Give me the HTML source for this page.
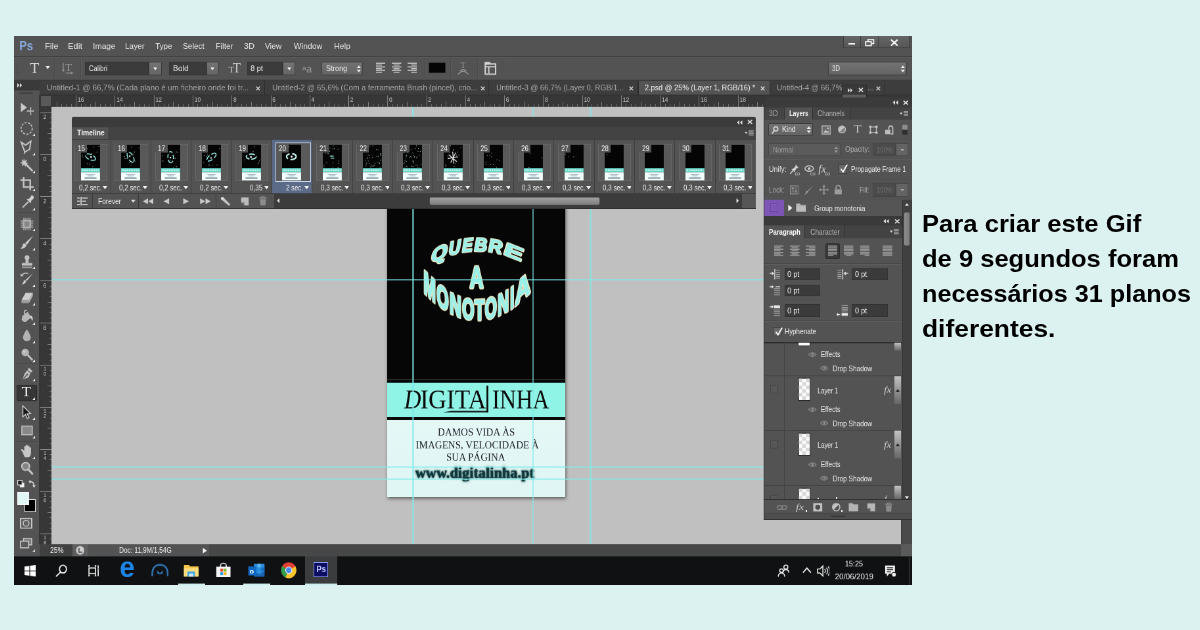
<!DOCTYPE html>
<html><head><meta charset="utf-8"><title>Photoshop timeline</title>
<style>
html,body{margin:0;padding:0;}
body{width:1200px;height:630px;overflow:hidden;background:#dcf2f0;position:relative;font-family:"Liberation Sans",sans-serif;}
#ps{position:absolute;left:14px;top:36px;width:1366px;height:768px;transform-origin:0 0;transform:scale(0.65703,0.71484);overflow:hidden;background:#535353;will-change:transform;}
#ps div,#ps svg{position:absolute;box-sizing:border-box;}
#ps .t{white-space:nowrap;}
#cap{position:absolute;left:921.6px;top:206px;font-family:"Liberation Sans",sans-serif;font-weight:700;color:#000;font-size:24px;line-height:35.1px;white-space:nowrap;transform-origin:0 0;will-change:transform;}
#cap div{transform-origin:0 50%;width:max-content;}
</style></head><body>
<div id="ps">
<div style="left:0px;top:0px;width:1366px;height:28.4px;background:#535353;"></div>
<div style="left:0px;top:27.98px;width:1366px;height:1.5px;background:#3c3c3c"></div>
<div class="t" id="t1" style="top:3.31px;font-size:18.5px;line-height:22.2px;color:#86a8da;font-weight:700;left:7.61px;transform:scaleX(0.941);transform-origin:0 50%;">Ps</div>
<div class="t" id="t2" style="top:7.93px;font-size:11.5px;line-height:13.8px;color:#e6e6e6;left:47.18px;transform:scaleX(1.109);transform-origin:0 50%;">File</div>
<div class="t" id="t3" style="top:7.93px;font-size:11.5px;line-height:13.8px;color:#e6e6e6;left:82.19px;transform:scaleX(1.113);transform-origin:0 50%;">Edit</div>
<div class="t" id="t4" style="top:7.93px;font-size:11.5px;line-height:13.8px;color:#e6e6e6;left:120.24px;transform:scaleX(1.071);transform-origin:0 50%;">Image</div>
<div class="t" id="t5" style="top:7.93px;font-size:11.5px;line-height:13.8px;color:#e6e6e6;left:168.94px;transform:scaleX(1.031);transform-origin:0 50%;">Layer</div>
<div class="t" id="t6" style="top:7.93px;font-size:11.5px;line-height:13.8px;color:#e6e6e6;left:214.6px;transform:scaleX(1.038);transform-origin:0 50%;">Type</div>
<div class="t" id="t7" style="top:7.93px;font-size:11.5px;line-height:13.8px;color:#e6e6e6;left:257.22px;transform:scaleX(1.024);transform-origin:0 50%;">Select</div>
<div class="t" id="t8" style="top:7.93px;font-size:11.5px;line-height:13.8px;color:#e6e6e6;left:307.45px;transform:scaleX(1.042);transform-origin:0 50%;">Filter</div>
<div class="t" id="t9" style="top:7.93px;font-size:11.5px;line-height:13.8px;color:#e6e6e6;left:350.06px;transform:scaleX(1.087);transform-origin:0 50%;">3D</div>
<div class="t" id="t10" style="top:7.93px;font-size:11.5px;line-height:13.8px;color:#e6e6e6;left:382.02px;transform:scaleX(1.016);transform-origin:0 50%;">View</div>
<div class="t" id="t11" style="top:7.93px;font-size:11.5px;line-height:13.8px;color:#e6e6e6;left:426.16px;transform:scaleX(1.060);transform-origin:0 50%;">Window</div>
<div class="t" id="t12" style="top:7.93px;font-size:11.5px;line-height:13.8px;color:#e6e6e6;left:487.04px;transform:scaleX(1.062);transform-origin:0 50%;">Help</div>
<div style="left:1261.74px;top:0px;width:101.21px;height:17.21px;background:linear-gradient(#666,#565656);border:1px solid #3e3e3e;border-top:none;"></div>
<div style="left:1288.07px;top:0px;width:1px;height:16.79px;background:#3e3e3e"></div>
<div style="left:1315.47px;top:0px;width:1px;height:16.79px;background:#3e3e3e"></div>
<div style="left:1270.11px;top:10.07px;width:9.89px;height:1.96px;background:#f0f0f0;"></div>
<svg style="left:1295.23px;top:3.5px;width:15.22px;height:11.19px;" viewBox="0 0 10 8" preserveAspectRatio="none"><rect x="3.2" y="0.7" width="5.6" height="4" fill="none" stroke="#f0f0f0" stroke-width="1.2"/><rect x="0.8" y="2.8" width="5.6" height="4" fill="#5e5e5e" stroke="#f0f0f0" stroke-width="1.2"/></svg>
<svg style="left:1333.28px;top:4.2px;width:13.7px;height:10.49px;" viewBox="0 0 9 7.5" preserveAspectRatio="none"><path d="M1.2 0.8 L7.8 6.8 M7.8 0.8 L1.2 6.8" stroke="#f4f4f4" stroke-width="1.5" fill="none"/></svg>
<div style="left:0px;top:29.38px;width:1366px;height:32.17px;background:#535353;"></div>
<div style="left:0px;top:29.38px;width:1366px;height:1px;background:#5e5e5e"></div>
<div style="left:0px;top:60.85px;width:1366px;height:1px;background:#3f3f3f"></div>
<div style="left:4.87px;top:36.37px;width:1.52px;height:1.26px;background:#444;"></div>
<div style="left:4.87px;top:39.17px;width:1.52px;height:1.26px;background:#444;"></div>
<div style="left:4.87px;top:41.97px;width:1.52px;height:1.26px;background:#444;"></div>
<div style="left:4.87px;top:44.77px;width:1.52px;height:1.26px;background:#444;"></div>
<div style="left:4.87px;top:47.56px;width:1.52px;height:1.26px;background:#444;"></div>
<div style="left:4.87px;top:50.36px;width:1.52px;height:1.26px;background:#444;"></div>
<div style="left:4.87px;top:53.16px;width:1.52px;height:1.26px;background:#444;"></div>
<div class="t" id="t13" style="top:33.18px;font-size:20px;line-height:24px;color:#d4d4d4;font-family:'Liberation Serif',serif;left:24.35px;transform:scaleX(1.183);transform-origin:0 50%;">T</div>
<svg style="left:48.1px;top:42.25px;width:6.7px;height:4.48px;" viewBox="0 0 4.4 3.2" preserveAspectRatio="none"><path d="M0 0 H4.4 L2.2 3.2 Z" fill="#ececec"/></svg>
<div style="left:60.88px;top:32.17px;width:1px;height:26.58px;background:#494949"></div>
<div style="left:61.95px;top:32.17px;width:1px;height:26.58px;background:#5c5c5c"></div>
<svg style="left:71.53px;top:34.97px;width:19.79px;height:19.58px;" viewBox="0 0 13 14" preserveAspectRatio="none"><g stroke="#8e8e8e" fill="none" stroke-width="0.9"><path d="M2 2 V10 M0.8 8.6 L2 10.2 L3.2 8.6"/><path d="M4.5 12 H11 M9.8 10.9 L11.3 12 L9.8 13.1"/></g><text x="4" y="10" font-size="11" font-family="Liberation Serif,serif" fill="#9a9a9a">T</text></svg>
<div style="left:101.21px;top:32.17px;width:1px;height:26.58px;background:#494949"></div>
<div style="left:102.28px;top:32.17px;width:1px;height:26.58px;background:#5c5c5c"></div>
<div style="left:108.06px;top:36.37px;width:97.41px;height:18.19px;background:#3b3b3b;border:1px solid #333;"></div>
<div class="t" id="t14" style="top:39px;font-size:11px;line-height:13.2px;color:#ededed;left:114.15px;transform:scaleX(0.903);transform-origin:0 50%;">Calibri</div>
<div style="left:205.47px;top:36.37px;width:19.79px;height:18.19px;background:linear-gradient(#747474,#646464);border:1px solid #3c3c3c;border-radius:0 2px 2px 0;"></div>
<svg style="left:212.32px;top:44.21px;width:6.09px;height:3.92px;" viewBox="0 0 4 2.8" preserveAspectRatio="none"><path d="M0 0 H4 L2 2.8 Z" fill="#f0f0f0"/></svg>
<div style="left:235.91px;top:36.37px;width:57.38px;height:18.19px;background:#3b3b3b;border:1px solid #333;"></div>
<div class="t" id="t15" style="top:39px;font-size:11px;line-height:13.2px;color:#ededed;left:242px;transform:scaleX(1.071);transform-origin:0 50%;">Bold</div>
<div style="left:293.29px;top:36.37px;width:18.26px;height:18.19px;background:linear-gradient(#747474,#646464);border:1px solid #3c3c3c;border-radius:0 2px 2px 0;"></div>
<svg style="left:299.38px;top:44.21px;width:6.09px;height:3.92px;" viewBox="0 0 4 2.8" preserveAspectRatio="none"><path d="M0 0 H4 L2 2.8 Z" fill="#f0f0f0"/></svg>
<svg style="left:325.71px;top:34.97px;width:21.31px;height:20.98px;" viewBox="0 0 14 15" preserveAspectRatio="none"><text x="0.3" y="11.5" font-size="9" font-family="Liberation Serif,serif" fill="#cfcfcf">T</text><text x="4.6" y="11.5" font-size="13" font-family="Liberation Serif,serif" fill="#cfcfcf">T</text></svg>
<div style="left:354.63px;top:36.37px;width:54.79px;height:18.19px;background:#3b3b3b;border:1px solid #333;"></div>
<div class="t" id="t16" style="top:39px;font-size:11px;line-height:13.2px;color:#ededed;left:359.95px;transform:scaleX(1.036);transform-origin:0 50%;">8 pt</div>
<div style="left:409.42px;top:36.37px;width:18.26px;height:18.19px;background:linear-gradient(#747474,#646464);border:1px solid #3c3c3c;border-radius:0 2px 2px 0;"></div>
<svg style="left:415.51px;top:44.21px;width:6.09px;height:3.92px;" viewBox="0 0 4 2.8" preserveAspectRatio="none"><path d="M0 0 H4 L2 2.8 Z" fill="#f0f0f0"/></svg>
<svg style="left:438.34px;top:36.37px;width:19.79px;height:18.19px;" viewBox="0 0 13 13" preserveAspectRatio="none"><text x="0.5" y="8.5" font-size="7" font-family="Liberation Sans,sans-serif" fill="#9c9c9c">a</text><text x="4.6" y="10.5" font-size="10" font-family="Liberation Sans,sans-serif" fill="#9c9c9c">a</text></svg>
<div style="left:468.32px;top:36.37px;width:62.86px;height:18.19px;background:linear-gradient(#727272,#646464);border:1px solid #3c3c3c;border-radius:2px;"></div>
<div class="t" id="t17" style="top:39px;font-size:11px;line-height:13.2px;color:#f0f0f0;left:474.87px;transform:scaleX(0.986);transform-origin:0 50%;">Strong</div>
<svg style="left:521.29px;top:40.99px;width:7.61px;height:10.07px;" viewBox="0 0 5 7.2" preserveAspectRatio="none"><path d="M0.4 2.8 L2.5 0.2 L4.6 2.8 Z M0.4 4.4 L2.5 7 L4.6 4.4 Z" fill="#f0f0f0"/></svg>
<div style="left:540.31px;top:32.17px;width:1px;height:26.58px;background:#494949"></div>
<div style="left:541.38px;top:32.17px;width:1px;height:26.58px;background:#5c5c5c"></div>
<svg style="left:550.97px;top:37.07px;width:14.46px;height:15.11px;" viewBox="0 0 9.5 10.8" preserveAspectRatio="none"><rect x="0" y="0.3" width="9.5" height="1.05" fill="#c4c4c4"/><rect x="0" y="2.1" width="5.89" height="1.05" fill="#c4c4c4"/><rect x="0" y="3.9" width="9.5" height="1.05" fill="#c4c4c4"/><rect x="0" y="5.7" width="5.89" height="1.05" fill="#c4c4c4"/><rect x="0" y="7.5" width="9.5" height="1.05" fill="#c4c4c4"/><rect x="0" y="9.3" width="5.89" height="1.05" fill="#c4c4c4"/></svg>
<svg style="left:575.32px;top:37.07px;width:14.46px;height:15.11px;" viewBox="0 0 9.5 10.8" preserveAspectRatio="none"><rect x="0" y="0.3" width="9.5" height="1.05" fill="#c4c4c4"/><rect x="1.81" y="2.1" width="5.89" height="1.05" fill="#c4c4c4"/><rect x="0" y="3.9" width="9.5" height="1.05" fill="#c4c4c4"/><rect x="1.81" y="5.7" width="5.89" height="1.05" fill="#c4c4c4"/><rect x="0" y="7.5" width="9.5" height="1.05" fill="#c4c4c4"/><rect x="1.81" y="9.3" width="5.89" height="1.05" fill="#c4c4c4"/></svg>
<svg style="left:598.91px;top:37.07px;width:14.46px;height:15.11px;" viewBox="0 0 9.5 10.8" preserveAspectRatio="none"><rect x="0" y="0.3" width="9.5" height="1.05" fill="#c4c4c4"/><rect x="3.61" y="2.1" width="5.89" height="1.05" fill="#c4c4c4"/><rect x="0" y="3.9" width="9.5" height="1.05" fill="#c4c4c4"/><rect x="3.61" y="5.7" width="5.89" height="1.05" fill="#c4c4c4"/><rect x="0" y="7.5" width="9.5" height="1.05" fill="#c4c4c4"/><rect x="3.61" y="9.3" width="5.89" height="1.05" fill="#c4c4c4"/></svg>
<div style="left:624.02px;top:32.17px;width:1px;height:26.58px;background:#494949"></div>
<div style="left:625.09px;top:32.17px;width:1px;height:26.58px;background:#5c5c5c"></div>
<div style="left:631.33px;top:37.49px;width:25.42px;height:14.27px;background:#050505;border:1px solid #2a2a2a;"></div>
<div style="left:664.36px;top:32.17px;width:1px;height:26.58px;background:#494949"></div>
<div style="left:665.42px;top:32.17px;width:1px;height:26.58px;background:#5c5c5c"></div>
<svg style="left:672.73px;top:34.97px;width:21.31px;height:20.98px;" viewBox="0 0 14 15" preserveAspectRatio="none"><g fill="none" stroke="#9a9a9a" stroke-width="1"><path d="M2 13.2 Q7 7.4 12 13.2"/><path d="M4 10 Q7 7.2 10 10"/></g><text x="4.3" y="7.2" font-size="8.5" font-family="Liberation Serif,serif" fill="#9a9a9a">T</text></svg>
<div style="left:705.45px;top:32.17px;width:1px;height:26.58px;background:#494949"></div>
<div style="left:706.51px;top:32.17px;width:1px;height:26.58px;background:#5c5c5c"></div>
<svg style="left:716.1px;top:36.37px;width:19.03px;height:18.89px;" viewBox="0 0 12.5 13.5" preserveAspectRatio="none"><path d="M0.8 0.8 H5 L6 2.2 H11.2 V12.4 H0.8 Z" fill="none" stroke="#d4d4d4" stroke-width="1.3"/><path d="M1 5 H11 M4.4 5 V12" stroke="#d4d4d4" stroke-width="1.2" fill="none"/><rect x="0.8" y="0.8" width="4.4" height="2.2" fill="#d4d4d4"/></svg>
<div style="left:746.54px;top:32.17px;width:1px;height:26.58px;background:#494949"></div>
<div style="left:747.61px;top:32.17px;width:1px;height:26.58px;background:#5c5c5c"></div>
<div style="left:1238.91px;top:36.37px;width:120.24px;height:18.19px;background:linear-gradient(#727272,#646464);border:1px solid #3a3a3a;border-radius:2px;"></div>
<div class="t" id="t18" style="top:39.3px;font-size:10.5px;line-height:12.6px;color:#f0f0f0;left:1245px;transform:scaleX(0.906);transform-origin:0 50%;">3D</div>
<svg style="left:1349.26px;top:40.99px;width:7.61px;height:10.07px;" viewBox="0 0 5 7.2" preserveAspectRatio="none"><path d="M0.4 2.8 L2.5 0.2 L4.6 2.8 Z M0.4 4.4 L2.5 7 L4.6 4.4 Z" fill="#f0f0f0"/></svg>
<div style="left:0px;top:61.55px;width:1366px;height:20.98px;background:#3a3a3a;"></div>
<div style="left:0px;top:61.55px;width:38.81px;height:13.01px;background:#3a3a3a;"></div>
<svg style="left:4.57px;top:65.75px;width:7.61px;height:5.88px;" viewBox="0 0 5 4.2" preserveAspectRatio="none"><path d="M0 0 L2.2 2.1 L0 4.2 Z M2.6 0 L4.8 2.1 L2.6 4.2 Z" fill="#e0e0e0"/></svg>
<div style="left:0px;top:74.56px;width:38.81px;height:652.87px;background:#535353;"></div>
<div style="left:0px;top:74.56px;width:38.81px;height:1px;background:#2e2e2e"></div>
<div style="left:8.37px;top:79.18px;width:20.55px;height:1.68px;background:#3e3e3e;"></div>
<div style="left:38.81px;top:62.67px;width:343.21px;height:18.89px;background:#3d3d3d;border-right:1px solid #2d2d2d;"></div>
<div class="t" id="t19" style="top:66.14px;font-size:11px;line-height:13.2px;color:#a6a6a6;left:50.23px;transform:scaleX(1.078);transform-origin:0 50%;">Untitled-1 @ 66,7% (Cada plano é um ficheiro onde foi tr...</div>
<svg style="left:367.87px;top:69.67px;width:7px;height:6.71px;" viewBox="0 0 4.6 4.8" preserveAspectRatio="none"><path d="M0.5 0.5 L4.1 4.3 M4.1 0.5 L0.5 4.3" stroke="#d0d0d0" stroke-width="1" fill="none"/></svg>
<div style="left:382.02px;top:62.67px;width:340.93px;height:18.89px;background:#3d3d3d;border-right:1px solid #2d2d2d;"></div>
<div class="t" id="t20" style="top:66.14px;font-size:11px;line-height:13.2px;color:#a6a6a6;left:392.68px;transform:scaleX(1.058);transform-origin:0 50%;">Untitled-2 @ 65,6% (Com a ferramenta Brush (pincel), crio...</div>
<svg style="left:710.32px;top:69.67px;width:7px;height:6.71px;" viewBox="0 0 4.6 4.8" preserveAspectRatio="none"><path d="M0.5 0.5 L4.1 4.3 M4.1 0.5 L0.5 4.3" stroke="#d0d0d0" stroke-width="1" fill="none"/></svg>
<div style="left:722.95px;top:62.67px;width:227.54px;height:18.89px;background:#3d3d3d;border-right:1px solid #2d2d2d;"></div>
<div class="t" id="t21" style="top:66.14px;font-size:11px;line-height:13.2px;color:#a6a6a6;left:733.61px;transform:scaleX(1.036);transform-origin:0 50%;">Untitled-3 @ 66,7% (Layer 0, RGB/1...</div>
<svg style="left:935.58px;top:69.67px;width:7px;height:6.71px;" viewBox="0 0 4.6 4.8" preserveAspectRatio="none"><path d="M0.5 0.5 L4.1 4.3 M4.1 0.5 L0.5 4.3" stroke="#d0d0d0" stroke-width="1" fill="none"/></svg>
<div style="left:950.49px;top:62.67px;width:200.14px;height:19.86px;background:#535353;border-left:1px solid #2d2d2d;border-right:1px solid #2d2d2d;"></div>
<div class="t" id="t22" style="top:66.14px;font-size:11px;line-height:13.2px;color:#f0f0f0;left:960.39px;transform:scaleX(1.014);transform-origin:0 50%;">2.psd @ 25% (Layer 1, RGB/16) *</div>
<svg style="left:1136.48px;top:69.67px;width:7px;height:6.71px;" viewBox="0 0 4.6 4.8" preserveAspectRatio="none"><path d="M0.5 0.5 L4.1 4.3 M4.1 0.5 L0.5 4.3" stroke="#dcdcdc" stroke-width="1" fill="none"/></svg>
<div style="left:1150.64px;top:62.67px;width:175.03px;height:18.89px;background:#3d3d3d;border-right:1px solid #2d2d2d;"></div>
<div class="t" id="t23" style="top:66.14px;font-size:11px;line-height:13.2px;color:#a6a6a6;left:1161.29px;transform:scaleX(1.043);transform-origin:0 50%;">Untitled-4 @ 66,7%</div>
<svg style="left:1311.51px;top:69.67px;width:7px;height:6.71px;" viewBox="0 0 4.6 4.8" preserveAspectRatio="none"><path d="M0.5 0.5 L4.1 4.3 M4.1 0.5 L0.5 4.3" stroke="#d0d0d0" stroke-width="1" fill="none"/></svg>
<div style="left:1325.67px;top:62.67px;width:40.33px;height:18.89px;background:#3d3d3d;"></div>
<div class="t" id="t24" style="top:66.14px;font-size:11px;line-height:13.2px;color:#a6a6a6;left:1299.18px;transform:scaleX(0.929);transform-origin:0 50%;">...</div>
<div style="left:38.81px;top:82.54px;width:1327.19px;height:16.09px;background:#373737;"></div>
<div style="left:37.75px;top:82.54px;width:19.33px;height:628.11px;background:#373737;"></div>
<div style="left:41.09px;top:83.93px;width:15.22px;height:13.99px;background:#5a5a5a;"></div>
<div style="left:64.55px;top:92.33px;width:1px;height:6.3px;background:#7a7a7a"></div>
<div style="left:71.96px;top:95.13px;width:1px;height:3.5px;background:#6e6e6e"></div>
<div style="left:79.36px;top:95.13px;width:1px;height:3.5px;background:#6e6e6e"></div>
<div style="left:86.77px;top:95.13px;width:1px;height:3.5px;background:#6e6e6e"></div>
<div style="left:94.18px;top:83.23px;width:1px;height:15.39px;background:#7c7c7c"></div>
<div class="t" id="t25" style="top:83.87px;font-size:8.5px;line-height:10.2px;color:#c8c8c8;left:96.92px;">16</div>
<div style="left:101.59px;top:95.13px;width:1px;height:3.5px;background:#6e6e6e"></div>
<div style="left:109px;top:95.13px;width:1px;height:3.5px;background:#6e6e6e"></div>
<div style="left:116.41px;top:95.13px;width:1px;height:3.5px;background:#6e6e6e"></div>
<div style="left:123.82px;top:92.33px;width:1px;height:6.3px;background:#7a7a7a"></div>
<div style="left:131.22px;top:95.13px;width:1px;height:3.5px;background:#6e6e6e"></div>
<div style="left:138.63px;top:95.13px;width:1px;height:3.5px;background:#6e6e6e"></div>
<div style="left:146.04px;top:95.13px;width:1px;height:3.5px;background:#6e6e6e"></div>
<div style="left:153.45px;top:83.23px;width:1px;height:15.39px;background:#7c7c7c"></div>
<div class="t" id="t26" style="top:83.87px;font-size:8.5px;line-height:10.2px;color:#c8c8c8;left:156.19px;">14</div>
<div style="left:160.86px;top:95.13px;width:1px;height:3.5px;background:#6e6e6e"></div>
<div style="left:168.27px;top:95.13px;width:1px;height:3.5px;background:#6e6e6e"></div>
<div style="left:175.67px;top:95.13px;width:1px;height:3.5px;background:#6e6e6e"></div>
<div style="left:183.08px;top:92.33px;width:1px;height:6.3px;background:#7a7a7a"></div>
<div style="left:190.49px;top:95.13px;width:1px;height:3.5px;background:#6e6e6e"></div>
<div style="left:197.9px;top:95.13px;width:1px;height:3.5px;background:#6e6e6e"></div>
<div style="left:205.31px;top:95.13px;width:1px;height:3.5px;background:#6e6e6e"></div>
<div style="left:212.72px;top:83.23px;width:1px;height:15.39px;background:#7c7c7c"></div>
<div class="t" id="t27" style="top:83.87px;font-size:8.5px;line-height:10.2px;color:#c8c8c8;left:215.46px;">12</div>
<div style="left:220.12px;top:95.13px;width:1px;height:3.5px;background:#6e6e6e"></div>
<div style="left:227.53px;top:95.13px;width:1px;height:3.5px;background:#6e6e6e"></div>
<div style="left:234.94px;top:95.13px;width:1px;height:3.5px;background:#6e6e6e"></div>
<div style="left:242.35px;top:92.33px;width:1px;height:6.3px;background:#7a7a7a"></div>
<div style="left:249.76px;top:95.13px;width:1px;height:3.5px;background:#6e6e6e"></div>
<div style="left:257.17px;top:95.13px;width:1px;height:3.5px;background:#6e6e6e"></div>
<div style="left:264.57px;top:95.13px;width:1px;height:3.5px;background:#6e6e6e"></div>
<div style="left:271.98px;top:83.23px;width:1px;height:15.39px;background:#7c7c7c"></div>
<div class="t" id="t28" style="top:83.87px;font-size:8.5px;line-height:10.2px;color:#c8c8c8;left:274.72px;">10</div>
<div style="left:279.39px;top:95.13px;width:1px;height:3.5px;background:#6e6e6e"></div>
<div style="left:286.8px;top:95.13px;width:1px;height:3.5px;background:#6e6e6e"></div>
<div style="left:294.21px;top:95.13px;width:1px;height:3.5px;background:#6e6e6e"></div>
<div style="left:301.62px;top:92.33px;width:1px;height:6.3px;background:#7a7a7a"></div>
<div style="left:309.02px;top:95.13px;width:1px;height:3.5px;background:#6e6e6e"></div>
<div style="left:316.43px;top:95.13px;width:1px;height:3.5px;background:#6e6e6e"></div>
<div style="left:323.84px;top:95.13px;width:1px;height:3.5px;background:#6e6e6e"></div>
<div style="left:331.25px;top:83.23px;width:1px;height:15.39px;background:#7c7c7c"></div>
<div class="t" id="t29" style="top:83.87px;font-size:8.5px;line-height:10.2px;color:#c8c8c8;left:333.99px;">8</div>
<div style="left:338.66px;top:95.13px;width:1px;height:3.5px;background:#6e6e6e"></div>
<div style="left:346.07px;top:95.13px;width:1px;height:3.5px;background:#6e6e6e"></div>
<div style="left:353.47px;top:95.13px;width:1px;height:3.5px;background:#6e6e6e"></div>
<div style="left:360.88px;top:92.33px;width:1px;height:6.3px;background:#7a7a7a"></div>
<div style="left:368.29px;top:95.13px;width:1px;height:3.5px;background:#6e6e6e"></div>
<div style="left:375.7px;top:95.13px;width:1px;height:3.5px;background:#6e6e6e"></div>
<div style="left:383.11px;top:95.13px;width:1px;height:3.5px;background:#6e6e6e"></div>
<div style="left:390.52px;top:83.23px;width:1px;height:15.39px;background:#7c7c7c"></div>
<div class="t" id="t30" style="top:83.87px;font-size:8.5px;line-height:10.2px;color:#c8c8c8;left:393.26px;">6</div>
<div style="left:397.92px;top:95.13px;width:1px;height:3.5px;background:#6e6e6e"></div>
<div style="left:405.33px;top:95.13px;width:1px;height:3.5px;background:#6e6e6e"></div>
<div style="left:412.74px;top:95.13px;width:1px;height:3.5px;background:#6e6e6e"></div>
<div style="left:420.15px;top:92.33px;width:1px;height:6.3px;background:#7a7a7a"></div>
<div style="left:427.56px;top:95.13px;width:1px;height:3.5px;background:#6e6e6e"></div>
<div style="left:434.97px;top:95.13px;width:1px;height:3.5px;background:#6e6e6e"></div>
<div style="left:442.37px;top:95.13px;width:1px;height:3.5px;background:#6e6e6e"></div>
<div style="left:449.78px;top:83.23px;width:1px;height:15.39px;background:#7c7c7c"></div>
<div class="t" id="t31" style="top:83.87px;font-size:8.5px;line-height:10.2px;color:#c8c8c8;left:452.52px;">4</div>
<div style="left:457.19px;top:95.13px;width:1px;height:3.5px;background:#6e6e6e"></div>
<div style="left:464.6px;top:95.13px;width:1px;height:3.5px;background:#6e6e6e"></div>
<div style="left:472.01px;top:95.13px;width:1px;height:3.5px;background:#6e6e6e"></div>
<div style="left:479.42px;top:92.33px;width:1px;height:6.3px;background:#7a7a7a"></div>
<div style="left:486.82px;top:95.13px;width:1px;height:3.5px;background:#6e6e6e"></div>
<div style="left:494.23px;top:95.13px;width:1px;height:3.5px;background:#6e6e6e"></div>
<div style="left:501.64px;top:95.13px;width:1px;height:3.5px;background:#6e6e6e"></div>
<div style="left:509.05px;top:83.23px;width:1px;height:15.39px;background:#7c7c7c"></div>
<div class="t" id="t32" style="top:83.87px;font-size:8.5px;line-height:10.2px;color:#c8c8c8;left:511.79px;">2</div>
<div style="left:516.46px;top:95.13px;width:1px;height:3.5px;background:#6e6e6e"></div>
<div style="left:523.87px;top:95.13px;width:1px;height:3.5px;background:#6e6e6e"></div>
<div style="left:531.28px;top:95.13px;width:1px;height:3.5px;background:#6e6e6e"></div>
<div style="left:538.68px;top:92.33px;width:1px;height:6.3px;background:#7a7a7a"></div>
<div style="left:546.09px;top:95.13px;width:1px;height:3.5px;background:#6e6e6e"></div>
<div style="left:553.5px;top:95.13px;width:1px;height:3.5px;background:#6e6e6e"></div>
<div style="left:560.91px;top:95.13px;width:1px;height:3.5px;background:#6e6e6e"></div>
<div style="left:568.32px;top:83.23px;width:1px;height:15.39px;background:#7c7c7c"></div>
<div class="t" id="t33" style="top:83.87px;font-size:8.5px;line-height:10.2px;color:#c8c8c8;left:571.06px;">0</div>
<div style="left:575.73px;top:95.13px;width:1px;height:3.5px;background:#6e6e6e"></div>
<div style="left:583.13px;top:95.13px;width:1px;height:3.5px;background:#6e6e6e"></div>
<div style="left:590.54px;top:95.13px;width:1px;height:3.5px;background:#6e6e6e"></div>
<div style="left:597.95px;top:92.33px;width:1px;height:6.3px;background:#7a7a7a"></div>
<div style="left:605.36px;top:95.13px;width:1px;height:3.5px;background:#6e6e6e"></div>
<div style="left:612.77px;top:95.13px;width:1px;height:3.5px;background:#6e6e6e"></div>
<div style="left:620.18px;top:95.13px;width:1px;height:3.5px;background:#6e6e6e"></div>
<div style="left:627.58px;top:83.23px;width:1px;height:15.39px;background:#7c7c7c"></div>
<div class="t" id="t34" style="top:83.87px;font-size:8.5px;line-height:10.2px;color:#c8c8c8;left:630.32px;">2</div>
<div style="left:634.99px;top:95.13px;width:1px;height:3.5px;background:#6e6e6e"></div>
<div style="left:642.4px;top:95.13px;width:1px;height:3.5px;background:#6e6e6e"></div>
<div style="left:649.81px;top:95.13px;width:1px;height:3.5px;background:#6e6e6e"></div>
<div style="left:657.22px;top:92.33px;width:1px;height:6.3px;background:#7a7a7a"></div>
<div style="left:664.63px;top:95.13px;width:1px;height:3.5px;background:#6e6e6e"></div>
<div style="left:672.03px;top:95.13px;width:1px;height:3.5px;background:#6e6e6e"></div>
<div style="left:679.44px;top:95.13px;width:1px;height:3.5px;background:#6e6e6e"></div>
<div style="left:686.85px;top:83.23px;width:1px;height:15.39px;background:#7c7c7c"></div>
<div class="t" id="t35" style="top:83.87px;font-size:8.5px;line-height:10.2px;color:#c8c8c8;left:689.59px;">4</div>
<div style="left:694.26px;top:95.13px;width:1px;height:3.5px;background:#6e6e6e"></div>
<div style="left:701.67px;top:95.13px;width:1px;height:3.5px;background:#6e6e6e"></div>
<div style="left:709.08px;top:95.13px;width:1px;height:3.5px;background:#6e6e6e"></div>
<div style="left:716.48px;top:92.33px;width:1px;height:6.3px;background:#7a7a7a"></div>
<div style="left:723.89px;top:95.13px;width:1px;height:3.5px;background:#6e6e6e"></div>
<div style="left:731.3px;top:95.13px;width:1px;height:3.5px;background:#6e6e6e"></div>
<div style="left:738.71px;top:95.13px;width:1px;height:3.5px;background:#6e6e6e"></div>
<div style="left:746.12px;top:83.23px;width:1px;height:15.39px;background:#7c7c7c"></div>
<div class="t" id="t36" style="top:83.87px;font-size:8.5px;line-height:10.2px;color:#c8c8c8;left:748.86px;">6</div>
<div style="left:753.53px;top:95.13px;width:1px;height:3.5px;background:#6e6e6e"></div>
<div style="left:760.93px;top:95.13px;width:1px;height:3.5px;background:#6e6e6e"></div>
<div style="left:768.34px;top:95.13px;width:1px;height:3.5px;background:#6e6e6e"></div>
<div style="left:775.75px;top:92.33px;width:1px;height:6.3px;background:#7a7a7a"></div>
<div style="left:783.16px;top:95.13px;width:1px;height:3.5px;background:#6e6e6e"></div>
<div style="left:790.57px;top:95.13px;width:1px;height:3.5px;background:#6e6e6e"></div>
<div style="left:797.98px;top:95.13px;width:1px;height:3.5px;background:#6e6e6e"></div>
<div style="left:805.38px;top:83.23px;width:1px;height:15.39px;background:#7c7c7c"></div>
<div class="t" id="t37" style="top:83.87px;font-size:8.5px;line-height:10.2px;color:#c8c8c8;left:808.12px;">8</div>
<div style="left:812.79px;top:95.13px;width:1px;height:3.5px;background:#6e6e6e"></div>
<div style="left:820.2px;top:95.13px;width:1px;height:3.5px;background:#6e6e6e"></div>
<div style="left:827.61px;top:95.13px;width:1px;height:3.5px;background:#6e6e6e"></div>
<div style="left:835.02px;top:92.33px;width:1px;height:6.3px;background:#7a7a7a"></div>
<div style="left:842.43px;top:95.13px;width:1px;height:3.5px;background:#6e6e6e"></div>
<div style="left:849.83px;top:95.13px;width:1px;height:3.5px;background:#6e6e6e"></div>
<div style="left:857.24px;top:95.13px;width:1px;height:3.5px;background:#6e6e6e"></div>
<div style="left:864.65px;top:83.23px;width:1px;height:15.39px;background:#7c7c7c"></div>
<div class="t" id="t38" style="top:83.87px;font-size:8.5px;line-height:10.2px;color:#c8c8c8;left:867.39px;">10</div>
<div style="left:872.06px;top:95.13px;width:1px;height:3.5px;background:#6e6e6e"></div>
<div style="left:879.47px;top:95.13px;width:1px;height:3.5px;background:#6e6e6e"></div>
<div style="left:886.88px;top:95.13px;width:1px;height:3.5px;background:#6e6e6e"></div>
<div style="left:894.28px;top:92.33px;width:1px;height:6.3px;background:#7a7a7a"></div>
<div style="left:901.69px;top:95.13px;width:1px;height:3.5px;background:#6e6e6e"></div>
<div style="left:909.1px;top:95.13px;width:1px;height:3.5px;background:#6e6e6e"></div>
<div style="left:916.51px;top:95.13px;width:1px;height:3.5px;background:#6e6e6e"></div>
<div style="left:923.92px;top:83.23px;width:1px;height:15.39px;background:#7c7c7c"></div>
<div class="t" id="t39" style="top:83.87px;font-size:8.5px;line-height:10.2px;color:#c8c8c8;left:926.66px;">12</div>
<div style="left:931.33px;top:95.13px;width:1px;height:3.5px;background:#6e6e6e"></div>
<div style="left:938.73px;top:95.13px;width:1px;height:3.5px;background:#6e6e6e"></div>
<div style="left:946.14px;top:95.13px;width:1px;height:3.5px;background:#6e6e6e"></div>
<div style="left:953.55px;top:92.33px;width:1px;height:6.3px;background:#7a7a7a"></div>
<div style="left:960.96px;top:95.13px;width:1px;height:3.5px;background:#6e6e6e"></div>
<div style="left:968.37px;top:95.13px;width:1px;height:3.5px;background:#6e6e6e"></div>
<div style="left:975.78px;top:95.13px;width:1px;height:3.5px;background:#6e6e6e"></div>
<div style="left:983.19px;top:83.23px;width:1px;height:15.39px;background:#7c7c7c"></div>
<div class="t" id="t40" style="top:83.87px;font-size:8.5px;line-height:10.2px;color:#c8c8c8;left:985.92px;">14</div>
<div style="left:990.59px;top:95.13px;width:1px;height:3.5px;background:#6e6e6e"></div>
<div style="left:998px;top:95.13px;width:1px;height:3.5px;background:#6e6e6e"></div>
<div style="left:1005.41px;top:95.13px;width:1px;height:3.5px;background:#6e6e6e"></div>
<div style="left:1012.82px;top:92.33px;width:1px;height:6.3px;background:#7a7a7a"></div>
<div style="left:1020.23px;top:95.13px;width:1px;height:3.5px;background:#6e6e6e"></div>
<div style="left:1027.64px;top:95.13px;width:1px;height:3.5px;background:#6e6e6e"></div>
<div style="left:1035.04px;top:95.13px;width:1px;height:3.5px;background:#6e6e6e"></div>
<div style="left:1042.45px;top:83.23px;width:1px;height:15.39px;background:#7c7c7c"></div>
<div class="t" id="t41" style="top:83.87px;font-size:8.5px;line-height:10.2px;color:#c8c8c8;left:1045.19px;">16</div>
<div style="left:1049.86px;top:95.13px;width:1px;height:3.5px;background:#6e6e6e"></div>
<div style="left:1057.27px;top:95.13px;width:1px;height:3.5px;background:#6e6e6e"></div>
<div style="left:1064.68px;top:95.13px;width:1px;height:3.5px;background:#6e6e6e"></div>
<div style="left:1072.09px;top:92.33px;width:1px;height:6.3px;background:#7a7a7a"></div>
<div style="left:1079.49px;top:95.13px;width:1px;height:3.5px;background:#6e6e6e"></div>
<div style="left:1086.9px;top:95.13px;width:1px;height:3.5px;background:#6e6e6e"></div>
<div style="left:1094.31px;top:95.13px;width:1px;height:3.5px;background:#6e6e6e"></div>
<div style="left:1101.72px;top:83.23px;width:1px;height:15.39px;background:#7c7c7c"></div>
<div class="t" id="t42" style="top:83.87px;font-size:8.5px;line-height:10.2px;color:#c8c8c8;left:1104.46px;">18</div>
<div style="left:1109.13px;top:95.13px;width:1px;height:3.5px;background:#6e6e6e"></div>
<div style="left:1116.54px;top:95.13px;width:1px;height:3.5px;background:#6e6e6e"></div>
<div style="left:1123.94px;top:95.13px;width:1px;height:3.5px;background:#6e6e6e"></div>
<div style="left:1131.35px;top:92.33px;width:1px;height:6.3px;background:#7a7a7a"></div>
<div style="left:1138.76px;top:95.13px;width:1px;height:3.5px;background:#6e6e6e"></div>
<div style="left:39.57px;top:106.6px;width:17.5px;height:1px;background:#8a8a8a"></div>
<div class="t" id="t43" style="top:108.49px;font-size:8.5px;line-height:10.2px;color:#c8c8c8;left:44.59px;">2</div>
<div style="left:53.73px;top:113.96px;width:3.35px;height:1px;background:#6e6e6e"></div>
<div style="left:53.73px;top:121.32px;width:3.35px;height:1px;background:#6e6e6e"></div>
<div style="left:53.73px;top:128.68px;width:3.35px;height:1px;background:#6e6e6e"></div>
<div style="left:50.99px;top:136.04px;width:6.09px;height:1px;background:#7a7a7a"></div>
<div style="left:53.73px;top:143.41px;width:3.35px;height:1px;background:#6e6e6e"></div>
<div style="left:53.73px;top:150.77px;width:3.35px;height:1px;background:#6e6e6e"></div>
<div style="left:53.73px;top:158.13px;width:3.35px;height:1px;background:#6e6e6e"></div>
<div style="left:39.57px;top:165.49px;width:17.5px;height:1px;background:#8a8a8a"></div>
<div class="t" id="t44" style="top:167.39px;font-size:8.5px;line-height:10.2px;color:#c8c8c8;left:44.59px;">0</div>
<div style="left:53.73px;top:172.85px;width:3.35px;height:1px;background:#6e6e6e"></div>
<div style="left:53.73px;top:180.21px;width:3.35px;height:1px;background:#6e6e6e"></div>
<div style="left:53.73px;top:187.58px;width:3.35px;height:1px;background:#6e6e6e"></div>
<div style="left:50.99px;top:194.94px;width:6.09px;height:1px;background:#7a7a7a"></div>
<div style="left:53.73px;top:202.3px;width:3.35px;height:1px;background:#6e6e6e"></div>
<div style="left:53.73px;top:209.66px;width:3.35px;height:1px;background:#6e6e6e"></div>
<div style="left:53.73px;top:217.02px;width:3.35px;height:1px;background:#6e6e6e"></div>
<div style="left:39.57px;top:224.38px;width:17.5px;height:1px;background:#8a8a8a"></div>
<div class="t" id="t45" style="top:226.28px;font-size:8.5px;line-height:10.2px;color:#c8c8c8;left:44.59px;">2</div>
<div style="left:53.73px;top:231.75px;width:3.35px;height:1px;background:#6e6e6e"></div>
<div style="left:53.73px;top:239.11px;width:3.35px;height:1px;background:#6e6e6e"></div>
<div style="left:53.73px;top:246.47px;width:3.35px;height:1px;background:#6e6e6e"></div>
<div style="left:50.99px;top:253.83px;width:6.09px;height:1px;background:#7a7a7a"></div>
<div style="left:53.73px;top:261.19px;width:3.35px;height:1px;background:#6e6e6e"></div>
<div style="left:53.73px;top:268.56px;width:3.35px;height:1px;background:#6e6e6e"></div>
<div style="left:53.73px;top:275.92px;width:3.35px;height:1px;background:#6e6e6e"></div>
<div style="left:39.57px;top:283.28px;width:17.5px;height:1px;background:#8a8a8a"></div>
<div class="t" id="t46" style="top:285.17px;font-size:8.5px;line-height:10.2px;color:#c8c8c8;left:44.59px;">4</div>
<div style="left:53.73px;top:290.64px;width:3.35px;height:1px;background:#6e6e6e"></div>
<div style="left:53.73px;top:298px;width:3.35px;height:1px;background:#6e6e6e"></div>
<div style="left:53.73px;top:305.36px;width:3.35px;height:1px;background:#6e6e6e"></div>
<div style="left:50.99px;top:312.73px;width:6.09px;height:1px;background:#7a7a7a"></div>
<div style="left:53.73px;top:320.09px;width:3.35px;height:1px;background:#6e6e6e"></div>
<div style="left:53.73px;top:327.45px;width:3.35px;height:1px;background:#6e6e6e"></div>
<div style="left:53.73px;top:334.81px;width:3.35px;height:1px;background:#6e6e6e"></div>
<div style="left:39.57px;top:342.17px;width:17.5px;height:1px;background:#8a8a8a"></div>
<div class="t" id="t47" style="top:344.07px;font-size:8.5px;line-height:10.2px;color:#c8c8c8;left:44.59px;">6</div>
<div style="left:53.73px;top:349.53px;width:3.35px;height:1px;background:#6e6e6e"></div>
<div style="left:53.73px;top:356.9px;width:3.35px;height:1px;background:#6e6e6e"></div>
<div style="left:53.73px;top:364.26px;width:3.35px;height:1px;background:#6e6e6e"></div>
<div style="left:50.99px;top:371.62px;width:6.09px;height:1px;background:#7a7a7a"></div>
<div style="left:53.73px;top:378.98px;width:3.35px;height:1px;background:#6e6e6e"></div>
<div style="left:53.73px;top:386.34px;width:3.35px;height:1px;background:#6e6e6e"></div>
<div style="left:53.73px;top:393.7px;width:3.35px;height:1px;background:#6e6e6e"></div>
<div style="left:39.57px;top:401.07px;width:17.5px;height:1px;background:#8a8a8a"></div>
<div class="t" id="t48" style="top:402.96px;font-size:8.5px;line-height:10.2px;color:#c8c8c8;left:44.59px;">8</div>
<div style="left:53.73px;top:408.43px;width:3.35px;height:1px;background:#6e6e6e"></div>
<div style="left:53.73px;top:415.79px;width:3.35px;height:1px;background:#6e6e6e"></div>
<div style="left:53.73px;top:423.15px;width:3.35px;height:1px;background:#6e6e6e"></div>
<div style="left:50.99px;top:430.51px;width:6.09px;height:1px;background:#7a7a7a"></div>
<div style="left:53.73px;top:437.88px;width:3.35px;height:1px;background:#6e6e6e"></div>
<div style="left:53.73px;top:445.24px;width:3.35px;height:1px;background:#6e6e6e"></div>
<div style="left:53.73px;top:452.6px;width:3.35px;height:1px;background:#6e6e6e"></div>
<div style="left:39.57px;top:459.96px;width:17.5px;height:1px;background:#8a8a8a"></div>
<div class="t" id="t49" style="top:461.06px;font-size:7.5px;line-height:9px;color:#c8c8c8;left:45.05px;">1</div>
<div class="t" id="t50" style="top:468.47px;font-size:7.5px;line-height:9px;color:#c8c8c8;left:45.05px;">0</div>
<div style="left:53.73px;top:467.32px;width:3.35px;height:1px;background:#6e6e6e"></div>
<div style="left:53.73px;top:474.68px;width:3.35px;height:1px;background:#6e6e6e"></div>
<div style="left:53.73px;top:482.05px;width:3.35px;height:1px;background:#6e6e6e"></div>
<div style="left:50.99px;top:489.41px;width:6.09px;height:1px;background:#7a7a7a"></div>
<div style="left:53.73px;top:496.77px;width:3.35px;height:1px;background:#6e6e6e"></div>
<div style="left:53.73px;top:504.13px;width:3.35px;height:1px;background:#6e6e6e"></div>
<div style="left:53.73px;top:511.49px;width:3.35px;height:1px;background:#6e6e6e"></div>
<div style="left:39.57px;top:518.85px;width:17.5px;height:1px;background:#8a8a8a"></div>
<div class="t" id="t51" style="top:519.95px;font-size:7.5px;line-height:9px;color:#c8c8c8;left:45.05px;">1</div>
<div class="t" id="t52" style="top:527.36px;font-size:7.5px;line-height:9px;color:#c8c8c8;left:45.05px;">2</div>
<div style="left:53.73px;top:526.22px;width:3.35px;height:1px;background:#6e6e6e"></div>
<div style="left:53.73px;top:533.58px;width:3.35px;height:1px;background:#6e6e6e"></div>
<div style="left:53.73px;top:540.94px;width:3.35px;height:1px;background:#6e6e6e"></div>
<div style="left:50.99px;top:548.3px;width:6.09px;height:1px;background:#7a7a7a"></div>
<div style="left:53.73px;top:555.66px;width:3.35px;height:1px;background:#6e6e6e"></div>
<div style="left:53.73px;top:563.03px;width:3.35px;height:1px;background:#6e6e6e"></div>
<div style="left:53.73px;top:570.39px;width:3.35px;height:1px;background:#6e6e6e"></div>
<div style="left:39.57px;top:577.75px;width:17.5px;height:1px;background:#8a8a8a"></div>
<div class="t" id="t53" style="top:578.84px;font-size:7.5px;line-height:9px;color:#c8c8c8;left:45.05px;">1</div>
<div class="t" id="t54" style="top:586.26px;font-size:7.5px;line-height:9px;color:#c8c8c8;left:45.05px;">4</div>
<div style="left:53.73px;top:585.11px;width:3.35px;height:1px;background:#6e6e6e"></div>
<div style="left:53.73px;top:592.47px;width:3.35px;height:1px;background:#6e6e6e"></div>
<div style="left:53.73px;top:599.83px;width:3.35px;height:1px;background:#6e6e6e"></div>
<div style="left:50.99px;top:607.2px;width:6.09px;height:1px;background:#7a7a7a"></div>
<div style="left:53.73px;top:614.56px;width:3.35px;height:1px;background:#6e6e6e"></div>
<div style="left:53.73px;top:621.92px;width:3.35px;height:1px;background:#6e6e6e"></div>
<div style="left:53.73px;top:629.28px;width:3.35px;height:1px;background:#6e6e6e"></div>
<div style="left:39.57px;top:636.64px;width:17.5px;height:1px;background:#8a8a8a"></div>
<div class="t" id="t55" style="top:637.74px;font-size:7.5px;line-height:9px;color:#c8c8c8;left:45.05px;">1</div>
<div class="t" id="t56" style="top:645.15px;font-size:7.5px;line-height:9px;color:#c8c8c8;left:45.05px;">6</div>
<div style="left:53.73px;top:644px;width:3.35px;height:1px;background:#6e6e6e"></div>
<div style="left:53.73px;top:651.37px;width:3.35px;height:1px;background:#6e6e6e"></div>
<div style="left:53.73px;top:658.73px;width:3.35px;height:1px;background:#6e6e6e"></div>
<div style="left:50.99px;top:666.09px;width:6.09px;height:1px;background:#7a7a7a"></div>
<div style="left:53.73px;top:673.45px;width:3.35px;height:1px;background:#6e6e6e"></div>
<div style="left:53.73px;top:680.81px;width:3.35px;height:1px;background:#6e6e6e"></div>
<div style="left:53.73px;top:688.17px;width:3.35px;height:1px;background:#6e6e6e"></div>
<div style="left:39.57px;top:695.54px;width:17.5px;height:1px;background:#8a8a8a"></div>
<div class="t" id="t57" style="top:696.63px;font-size:7.5px;line-height:9px;color:#c8c8c8;left:45.05px;">1</div>
<div class="t" id="t58" style="top:704.05px;font-size:7.5px;line-height:9px;color:#c8c8c8;left:45.05px;">8</div>
<div style="left:53.73px;top:702.9px;width:3.35px;height:1px;background:#6e6e6e"></div>
<div style="left:38.81px;top:82.54px;width:1px;height:628.11px;background:#333"></div>
<div style="left:38.81px;top:81.98px;width:1327.19px;height:1px;background:#2d2d2d"></div>
<div style="left:57.08px;top:98.62px;width:1292.94px;height:612.02px;background:#c0c0c0;"></div>
<div style="left:1350.02px;top:98.62px;width:15.98px;height:612.02px;background:#4a4a4a;border-left:1px solid #3a3a3a;"></div>
<div style="left:567.71px;top:165.49px;width:271.68px;height:479.41px;background:#060606;box-shadow:1px 2px 5px rgba(0,0,0,0.55);"></div>
<div style="left:567.71px;top:484.72px;width:271.68px;height:48.26px;background:#8ff3e6;"></div>
<div style="left:567.71px;top:480.24px;width:271.68px;height:1px;background:#2a2a2a"></div>
<div style="left:567.71px;top:532.7px;width:271.68px;height:4.48px;background:#0a0a0a;"></div>
<div style="left:567.71px;top:537.18px;width:271.68px;height:107.72px;background:linear-gradient(#e4f8f6,#e0f6f4);"></div>
<svg style="left:567.71px;top:165.49px;width:271.68px;height:319.23px;" viewBox="0 0 178.5 228.2" preserveAspectRatio="none"><g font-family="Liberation Sans,sans-serif" font-weight="700" fill="#efe6bf" stroke="#efe6bf" stroke-width="2.3" stroke-linejoin="round"><text transform="matrix(0.72 0.674 0 1.61 36.5 138.25)" font-size="20">M</text><text transform="matrix(0.77 0.522 0 1.53 49.4 150.15)" font-size="20">O</text><text transform="matrix(0.81 0.345 0 1.47 62.5 158.89)" font-size="20">N</text><text transform="matrix(0.77 0.136 0 1.44 75 164.1)" font-size="20">O</text><text transform="matrix(0.82 -0.039 0 1.44 87.4 166.23)" font-size="20">T</text><text transform="matrix(0.76 -0.206 0 1.45 97.8 165.7)" font-size="20">O</text><text transform="matrix(0.77 -0.395 0 1.49 110.6 162.14)" font-size="20">N</text><text transform="matrix(0.71 -0.490 0 1.53 123 155.63)" font-size="20">I</text><text transform="matrix(1.07 -0.954 0 1.59 127.8 152.3)" font-size="20">A</text><text transform="matrix(0.94 0.000 0 1.51 82.6 133.7)" font-size="20">A</text><text transform="matrix(1.03 -0.448 0 0.94 44 109.27)" font-size="20" font-style="italic">Q</text><text transform="matrix(0.81 -0.211 0 0.94 61.6 101.74)" font-size="20" font-style="italic">U</text><text transform="matrix(0.78 -0.092 0 0.94 75 98.33)" font-size="20" font-style="italic">E</text><text transform="matrix(0.88 0.025 0 0.94 87.2 96.98)" font-size="20" font-style="italic">B</text><text transform="matrix(0.94 0.182 0 0.94 101.4 97.51)" font-size="20" font-style="italic">R</text><text transform="matrix(1.37 0.543 0 0.94 117 100.69)" font-size="20" font-style="italic">E</text></g><g font-family="Liberation Sans,sans-serif" font-weight="700" fill="#9af0e8" stroke="#9af0e8" stroke-width="0.7" stroke-linejoin="round"><text transform="matrix(0.72 0.674 0 1.61 36.5 138.25)" font-size="20">M</text><text transform="matrix(0.77 0.522 0 1.53 49.4 150.15)" font-size="20">O</text><text transform="matrix(0.81 0.345 0 1.47 62.5 158.89)" font-size="20">N</text><text transform="matrix(0.77 0.136 0 1.44 75 164.1)" font-size="20">O</text><text transform="matrix(0.82 -0.039 0 1.44 87.4 166.23)" font-size="20">T</text><text transform="matrix(0.76 -0.206 0 1.45 97.8 165.7)" font-size="20">O</text><text transform="matrix(0.77 -0.395 0 1.49 110.6 162.14)" font-size="20">N</text><text transform="matrix(0.71 -0.490 0 1.53 123 155.63)" font-size="20">I</text><text transform="matrix(1.07 -0.954 0 1.59 127.8 152.3)" font-size="20">A</text><text transform="matrix(0.94 0.000 0 1.51 82.6 133.7)" font-size="20">A</text><text transform="matrix(1.03 -0.448 0 0.94 44 109.27)" font-size="20" font-style="italic">Q</text><text transform="matrix(0.81 -0.211 0 0.94 61.6 101.74)" font-size="20" font-style="italic">U</text><text transform="matrix(0.78 -0.092 0 0.94 75 98.33)" font-size="20" font-style="italic">E</text><text transform="matrix(0.88 0.025 0 0.94 87.2 96.98)" font-size="20" font-style="italic">B</text><text transform="matrix(0.94 0.182 0 0.94 101.4 97.51)" font-size="20" font-style="italic">R</text><text transform="matrix(1.37 0.543 0 0.94 117 100.69)" font-size="20" font-style="italic">E</text></g></svg>
<svg style="left:567.71px;top:484.72px;width:271.68px;height:48.26px;" viewBox="0 0 178.5 34.5" preserveAspectRatio="none"><g fill="#0a0a0a" font-family="Liberation Serif,serif">
<text x="17" y="25.6" font-size="27" font-style="italic" textLength="17" lengthAdjust="spacingAndGlyphs">D</text>
<text x="33" y="25.6" font-size="26.5" textLength="66" lengthAdjust="spacingAndGlyphs">IGITA</text>
<text x="105" y="25.6" font-size="26.5" textLength="57" lengthAdjust="spacingAndGlyphs">INHA</text>
<rect x="99.3" y="3" width="1.8" height="26.5"/><path d="M56 29.6 L101.1 29.6 L101.1 28.2 L64 28.2 Z"/>
</g></svg>
<div class="t" id="t59" style="top:547.39px;font-size:14px;line-height:16.8px;color:#1c1c28;font-family:'Liberation Serif',serif;left:648.75px;transform:scaleX(1.071);transform-origin:50% 50%;">DAMOS VIDA ÀS</div>
<div class="t" id="t60" style="top:564.87px;font-size:14px;line-height:16.8px;color:#1c1c28;font-family:'Liberation Serif',serif;left:618.28px;transform:scaleX(1.074);transform-origin:50% 50%;">IMAGENS, VELOCIDADE À</div>
<div class="t" id="t61" style="top:582.22px;font-size:14px;line-height:16.8px;color:#1c1c28;font-family:'Liberation Serif',serif;left:661.35px;transform:scaleX(1.074);transform-origin:50% 50%;">SUA PÁGINA</div>
<div class="t" id="t62" style="top:598.4px;font-size:22px;line-height:26.4px;color:#12333a;font-weight:700;font-family:'Liberation Serif',serif;left:612.39px;transform:scaleX(1.015);transform-origin:50% 50%;text-shadow:0 0 2px #0a5a5a,0 0 4px rgba(20,70,70,.9),0 0 1px #000;">www.digitalinha.pt</div>
<div style="left:606.21px;top:98.62px;width:2.3px;height:612.02px;background:rgba(126,236,232,0.62)"></div>
<div style="left:788.55px;top:98.62px;width:2.3px;height:612.02px;background:rgba(126,236,232,0.62)"></div>
<div style="left:876.37px;top:98.62px;width:2.3px;height:612.02px;background:rgba(126,236,232,0.62)"></div>
<div style="left:57.08px;top:340.21px;width:1292.94px;height:2.1px;background:rgba(126,236,232,0.62)"></div>
<div style="left:57.08px;top:601.95px;width:1292.94px;height:2.1px;background:rgba(126,236,232,0.62)"></div>
<div style="left:57.08px;top:618.74px;width:1292.94px;height:2.1px;background:rgba(126,236,232,0.62)"></div>
<div style="left:87.52px;top:112.61px;width:1041.81px;height:129.12px;background:#2c2c2c;border-radius:4px 4px 0 0;"></div>
<div style="left:88.28px;top:113.31px;width:1040.29px;height:13.99px;background:#3b3b3b;border-radius:3px 3px 0 0;"></div>
<div style="left:88.28px;top:127.3px;width:1040.29px;height:17.07px;background:#434343;"></div>
<div style="left:88.28px;top:127.72px;width:56.31px;height:16.65px;background:#535353;border-right:1px solid #303030;"></div>
<div class="t" id="t63" style="top:129.37px;font-size:11px;line-height:13.2px;color:#f4f4f4;font-weight:700;left:95.89px;transform:scaleX(0.942);transform-origin:0 50%;">Timeline</div>
<svg style="left:1099.65px;top:117.51px;width:9.13px;height:6.16px;" viewBox="0 0 6 4.4" preserveAspectRatio="none"><path d="M2.6 0 L0.2 2.2 L2.6 4.4 Z M5.6 0 L3.2 2.2 L5.6 4.4 Z" fill="#dedede"/></svg>
<svg style="left:1116.39px;top:117.23px;width:8.37px;height:6.71px;" viewBox="0 0 5.5 4.8" preserveAspectRatio="none"><path d="M0.6 0.5 L4.9 4.3 M4.9 0.5 L0.6 4.3" stroke="#e6e6e6" stroke-width="1.1" fill="none"/></svg>
<svg style="left:1111.83px;top:132.2px;width:13.7px;height:7.41px;" viewBox="0 0 9 5.3" preserveAspectRatio="none"><path d="M0 1.6 H3 L1.5 3.6 Z" fill="#dcdcdc"/><path d="M4 0.6 H9 M4 2 H9 M4 3.4 H9 M4 4.8 H9" stroke="#b4b4b4" stroke-width="0.8"/></svg>
<div style="left:88.28px;top:144.37px;width:1040.29px;height:75.26px;background:#535353;"></div>
<div style="left:88.28px;top:144.37px;width:1040.29px;height:1px;background:#383838"></div>
<div style="left:91.93px;top:150.8px;width:49.92px;height:52.32px;background:#595959;border:1px solid #676767;"></div>
<svg style="left:101.67px;top:151.5px;width:28.92px;height:50.22px;" viewBox="0 0 19 35.9" preserveAspectRatio="none"><rect width="19" height="36" fill="#050505"/><ellipse cx="9.5" cy="12.5" rx="5.3" ry="2.6" transform="rotate(25 9.5 12.5)" fill="none" stroke="#8fe8e0" stroke-width="1" stroke-dasharray="5 2"/><circle cx="10" cy="12.3" r="0.9" fill="#dff"/><rect x="6.17" y="3.89" width="0.6" height="0.6" fill="#cfe"/><rect x="11.89" y="2.13" width="0.6" height="0.6" fill="#cfe"/><rect x="9.88" y="8.73" width="0.6" height="0.6" fill="#cfe"/><rect x="1.51" y="11.92" width="0.6" height="0.6" fill="#cfe"/><rect x="1.16" y="10.26" width="0.6" height="0.6" fill="#cfe"/><rect x="1.72" y="2.54" width="0.6" height="0.6" fill="#cfe"/><rect x="7.93" y="19.1" width="0.6" height="0.6" fill="#cfe"/><rect x="2.67" y="5.52" width="0.6" height="0.6" fill="#cfe"/><rect x="11.48" y="21.82" width="0.6" height="0.6" fill="#cfe"/><rect x="10.6" y="9.43" width="0.6" height="0.6" fill="#cfe"/><rect x="17.58" y="1.55" width="0.6" height="0.6" fill="#cfe"/><rect x="15.52" y="7.02" width="0.6" height="0.6" fill="#cfe"/><rect x="3.02" y="3.15" width="0.6" height="0.6" fill="#cfe"/><rect x="5.9" y="18.86" width="0.6" height="0.6" fill="#cfe"/><rect y="23.6" width="19" height="3.9" fill="#63d6c6"/><path d="M1 25.5 H18" stroke="#e8fffc" stroke-width="1.3" stroke-dasharray="1.6 0.7"/><rect y="27.5" width="19" height="8.5" fill="#f2fffd"/><path d="M5 29.7 H14 M6.5 31.2 H12.5" stroke="#9ab" stroke-width="0.7"/><path d="M3.5 33.4 H15.5" stroke="#567" stroke-width="1"/></svg>
<div style="left:92.54px;top:151.08px;width:18.57px;height:12.03px;background:#545454;"></div>
<div class="t" id="t64" style="top:151.08px;font-size:10.5px;line-height:12.6px;color:#f4f4f4;left:96.8px;transform:scaleX(0.938);transform-origin:0 50%;">15</div>
<div class="t" id="t65" style="top:205.77px;font-size:10.5px;line-height:12.6px;color:#f0f0f0;left:98.63px;transform:scaleX(0.935);transform-origin:0 50%;">0,2 sec.</div>
<svg style="left:135.15px;top:210.12px;width:6.7px;height:4.48px;" viewBox="0 0 4.4 3.2" preserveAspectRatio="none"><path d="M0 0 H4.6 L2.3 3.2 Z" fill="#f2f2f2"/></svg>
<div style="left:146.57px;top:144.79px;width:1px;height:74.84px;background:#3e3e3e"></div>
<div style="left:153.27px;top:150.8px;width:49.92px;height:52.32px;background:#595959;border:1px solid #676767;"></div>
<svg style="left:163.01px;top:151.5px;width:28.92px;height:50.22px;" viewBox="0 0 19 35.9" preserveAspectRatio="none"><rect width="19" height="36" fill="#050505"/><ellipse cx="9.5" cy="12.5" rx="5.6" ry="2.6" transform="rotate(62 9.5 12.5)" fill="none" stroke="#8fe8e0" stroke-width="1" stroke-dasharray="5 2"/><circle cx="8.7" cy="11.5" r="0.8" fill="#dff"/><rect x="3.66" y="13.59" width="0.6" height="0.6" fill="#cfe"/><rect x="11.68" y="8.88" width="0.6" height="0.6" fill="#cfe"/><rect x="10.09" y="1.91" width="0.6" height="0.6" fill="#cfe"/><rect x="1.54" y="5.13" width="0.6" height="0.6" fill="#cfe"/><rect x="12.41" y="10.12" width="0.6" height="0.6" fill="#cfe"/><rect x="6" y="13.68" width="0.6" height="0.6" fill="#cfe"/><rect x="8.43" y="7.24" width="0.6" height="0.6" fill="#cfe"/><rect x="14.4" y="16.23" width="0.6" height="0.6" fill="#cfe"/><rect x="4.77" y="13.42" width="0.6" height="0.6" fill="#cfe"/><rect x="9.69" y="20.19" width="0.6" height="0.6" fill="#cfe"/><rect x="13.27" y="6.98" width="0.6" height="0.6" fill="#cfe"/><rect x="17.65" y="3.16" width="0.6" height="0.6" fill="#cfe"/><rect x="7.82" y="17.54" width="0.6" height="0.6" fill="#cfe"/><rect x="3.16" y="11.5" width="0.6" height="0.6" fill="#cfe"/><rect y="23.6" width="19" height="3.9" fill="#63d6c6"/><path d="M1 25.5 H18" stroke="#e8fffc" stroke-width="1.3" stroke-dasharray="1.6 0.7"/><rect y="27.5" width="19" height="8.5" fill="#f2fffd"/><path d="M5 29.7 H14 M6.5 31.2 H12.5" stroke="#9ab" stroke-width="0.7"/><path d="M3.5 33.4 H15.5" stroke="#567" stroke-width="1"/></svg>
<div style="left:153.87px;top:151.08px;width:18.57px;height:12.03px;background:#545454;"></div>
<div class="t" id="t66" style="top:151.08px;font-size:10.5px;line-height:12.6px;color:#f4f4f4;left:158.14px;transform:scaleX(0.938);transform-origin:0 50%;">16</div>
<div class="t" id="t67" style="top:205.77px;font-size:10.5px;line-height:12.6px;color:#f0f0f0;left:159.96px;transform:scaleX(0.935);transform-origin:0 50%;">0,2 sec.</div>
<svg style="left:196.49px;top:210.12px;width:6.7px;height:4.48px;" viewBox="0 0 4.4 3.2" preserveAspectRatio="none"><path d="M0 0 H4.6 L2.3 3.2 Z" fill="#f2f2f2"/></svg>
<div style="left:207.91px;top:144.79px;width:1px;height:74.84px;background:#3e3e3e"></div>
<div style="left:214.6px;top:150.8px;width:49.92px;height:52.32px;background:#595959;border:1px solid #676767;"></div>
<svg style="left:224.34px;top:151.5px;width:28.92px;height:50.22px;" viewBox="0 0 19 35.9" preserveAspectRatio="none"><rect width="19" height="36" fill="#050505"/><ellipse cx="9.5" cy="12.5" rx="5.6" ry="2.8" transform="rotate(88 9.5 12.5)" fill="none" stroke="#8fe8e0" stroke-width="1" stroke-dasharray="4 2"/><circle cx="9.3" cy="13" r="0.8" fill="#dff"/><rect x="1.19" y="15.53" width="0.6" height="0.6" fill="#cfe"/><rect x="13.88" y="13.39" width="0.6" height="0.6" fill="#cfe"/><rect x="15.82" y="7.56" width="0.6" height="0.6" fill="#cfe"/><rect x="12.67" y="13.87" width="0.6" height="0.6" fill="#cfe"/><rect x="10.65" y="10.76" width="0.6" height="0.6" fill="#cfe"/><rect x="15.2" y="21.76" width="0.6" height="0.6" fill="#cfe"/><rect x="8.8" y="15.44" width="0.6" height="0.6" fill="#cfe"/><rect x="1.56" y="16.28" width="0.6" height="0.6" fill="#cfe"/><rect x="11.82" y="22.84" width="0.6" height="0.6" fill="#cfe"/><rect x="14.88" y="6.9" width="0.6" height="0.6" fill="#cfe"/><rect x="7.25" y="15.54" width="0.6" height="0.6" fill="#cfe"/><rect x="0.89" y="10.89" width="0.6" height="0.6" fill="#cfe"/><rect y="23.6" width="19" height="3.9" fill="#63d6c6"/><path d="M1 25.5 H18" stroke="#e8fffc" stroke-width="1.3" stroke-dasharray="1.6 0.7"/><rect y="27.5" width="19" height="8.5" fill="#f2fffd"/><path d="M5 29.7 H14 M6.5 31.2 H12.5" stroke="#9ab" stroke-width="0.7"/><path d="M3.5 33.4 H15.5" stroke="#567" stroke-width="1"/></svg>
<div style="left:215.21px;top:151.08px;width:18.57px;height:12.03px;background:#545454;"></div>
<div class="t" id="t68" style="top:151.08px;font-size:10.5px;line-height:12.6px;color:#f4f4f4;left:219.47px;transform:scaleX(0.938);transform-origin:0 50%;">17</div>
<div class="t" id="t69" style="top:205.77px;font-size:10.5px;line-height:12.6px;color:#f0f0f0;left:221.3px;transform:scaleX(0.935);transform-origin:0 50%;">0,2 sec.</div>
<svg style="left:257.83px;top:210.12px;width:6.7px;height:4.48px;" viewBox="0 0 4.4 3.2" preserveAspectRatio="none"><path d="M0 0 H4.6 L2.3 3.2 Z" fill="#f2f2f2"/></svg>
<div style="left:269.24px;top:144.79px;width:1px;height:74.84px;background:#3e3e3e"></div>
<div style="left:275.94px;top:150.8px;width:49.92px;height:52.32px;background:#595959;border:1px solid #676767;"></div>
<svg style="left:285.68px;top:151.5px;width:28.92px;height:50.22px;" viewBox="0 0 19 35.9" preserveAspectRatio="none"><rect width="19" height="36" fill="#050505"/><ellipse cx="9.5" cy="12.5" rx="5.6" ry="2.4" transform="rotate(-38 9.5 12.5)" fill="none" stroke="#8fe8e0" stroke-width="1" stroke-dasharray="5 2"/><circle cx="9.2" cy="13.3" r="0.8" fill="#dff"/><rect x="3.44" y="3.13" width="0.6" height="0.6" fill="#cfe"/><rect x="1.53" y="17.79" width="0.6" height="0.6" fill="#cfe"/><rect x="2.76" y="6.07" width="0.6" height="0.6" fill="#cfe"/><rect x="7.34" y="20.11" width="0.6" height="0.6" fill="#cfe"/><rect x="1.91" y="10.61" width="0.6" height="0.6" fill="#cfe"/><rect x="10.12" y="20.38" width="0.6" height="0.6" fill="#cfe"/><rect x="14.84" y="19.94" width="0.6" height="0.6" fill="#cfe"/><rect x="5.37" y="9.84" width="0.6" height="0.6" fill="#cfe"/><rect x="6.78" y="20.39" width="0.6" height="0.6" fill="#cfe"/><rect x="17.26" y="3.9" width="0.6" height="0.6" fill="#cfe"/><rect x="3.58" y="5.72" width="0.6" height="0.6" fill="#cfe"/><rect x="4.58" y="11.41" width="0.6" height="0.6" fill="#cfe"/><rect y="23.6" width="19" height="3.9" fill="#63d6c6"/><path d="M1 25.5 H18" stroke="#e8fffc" stroke-width="1.3" stroke-dasharray="1.6 0.7"/><rect y="27.5" width="19" height="8.5" fill="#f2fffd"/><path d="M5 29.7 H14 M6.5 31.2 H12.5" stroke="#9ab" stroke-width="0.7"/><path d="M3.5 33.4 H15.5" stroke="#567" stroke-width="1"/></svg>
<div style="left:276.55px;top:151.08px;width:18.57px;height:12.03px;background:#545454;"></div>
<div class="t" id="t70" style="top:151.08px;font-size:10.5px;line-height:12.6px;color:#f4f4f4;left:280.81px;transform:scaleX(0.938);transform-origin:0 50%;">18</div>
<div class="t" id="t71" style="top:205.77px;font-size:10.5px;line-height:12.6px;color:#f0f0f0;left:282.64px;transform:scaleX(0.935);transform-origin:0 50%;">0,2 sec.</div>
<svg style="left:319.16px;top:210.12px;width:6.7px;height:4.48px;" viewBox="0 0 4.4 3.2" preserveAspectRatio="none"><path d="M0 0 H4.6 L2.3 3.2 Z" fill="#f2f2f2"/></svg>
<div style="left:330.58px;top:144.79px;width:1px;height:74.84px;background:#3e3e3e"></div>
<div style="left:337.28px;top:150.8px;width:49.92px;height:52.32px;background:#595959;border:1px solid #676767;"></div>
<svg style="left:347.02px;top:151.5px;width:28.92px;height:50.22px;" viewBox="0 0 19 35.9" preserveAspectRatio="none"><rect width="19" height="36" fill="#050505"/><ellipse cx="9.3" cy="12" rx="5" ry="2.6" fill="none" stroke="#a8f0ea" stroke-width="1.2" stroke-dasharray="6 2"/><circle cx="9" cy="12.3" r="0.9" fill="#eff"/><rect x="10.81" y="6.41" width="0.6" height="0.6" fill="#cfe"/><rect x="0.57" y="9.93" width="0.6" height="0.6" fill="#cfe"/><rect x="6.96" y="13.24" width="0.6" height="0.6" fill="#cfe"/><rect x="17.18" y="16.04" width="0.6" height="0.6" fill="#cfe"/><rect x="9.52" y="14.4" width="0.6" height="0.6" fill="#cfe"/><rect x="12.33" y="1.71" width="0.6" height="0.6" fill="#cfe"/><rect x="16.24" y="18.05" width="0.6" height="0.6" fill="#cfe"/><rect x="15.8" y="18.45" width="0.6" height="0.6" fill="#cfe"/><rect x="7.37" y="9.48" width="0.6" height="0.6" fill="#cfe"/><rect x="2.31" y="14.77" width="0.6" height="0.6" fill="#cfe"/><rect y="23.6" width="19" height="3.9" fill="#63d6c6"/><path d="M1 25.5 H18" stroke="#e8fffc" stroke-width="1.3" stroke-dasharray="1.6 0.7"/><rect y="27.5" width="19" height="8.5" fill="#f2fffd"/><path d="M5 29.7 H14 M6.5 31.2 H12.5" stroke="#9ab" stroke-width="0.7"/><path d="M3.5 33.4 H15.5" stroke="#567" stroke-width="1"/></svg>
<div style="left:337.89px;top:151.08px;width:18.57px;height:12.03px;background:#545454;"></div>
<div class="t" id="t72" style="top:151.08px;font-size:10.5px;line-height:12.6px;color:#f4f4f4;left:342.15px;transform:scaleX(0.938);transform-origin:0 50%;">19</div>
<div class="t" id="t73" style="top:205.77px;font-size:10.5px;line-height:12.6px;color:#f0f0f0;left:359.19px;transform:scaleX(0.938);transform-origin:0 50%;">0,35</div>
<svg style="left:380.5px;top:210.12px;width:6.7px;height:4.48px;" viewBox="0 0 4.4 3.2" preserveAspectRatio="none"><path d="M0 0 H4.6 L2.3 3.2 Z" fill="#f2f2f2"/></svg>
<div style="left:391.92px;top:144.79px;width:1px;height:74.84px;background:#3e3e3e"></div>
<div style="left:392.83px;top:144.93px;width:60.12px;height:74.7px;background:#5b6b87;"></div>
<div style="left:398.31px;top:148.84px;width:54.18px;height:55.12px;background:#5a5a5a;border:1.6px solid #cfdcf2;"></div>
<svg style="left:408.35px;top:151.5px;width:28.92px;height:50.22px;" viewBox="0 0 19 35.9" preserveAspectRatio="none"><rect width="19" height="36" fill="#050505"/><ellipse cx="9.3" cy="12" rx="4.8" ry="2.9" fill="none" stroke="#c8f8f4" stroke-width="1.4" stroke-dasharray="7 2.5"/><circle cx="9.6" cy="12" r="1" fill="#eff"/><rect x="1.59" y="2.02" width="0.6" height="0.6" fill="#cfe"/><rect x="4.15" y="4.15" width="0.6" height="0.6" fill="#cfe"/><rect x="6.45" y="1.68" width="0.6" height="0.6" fill="#cfe"/><rect y="23.6" width="19" height="3.9" fill="#63d6c6"/><path d="M1 25.5 H18" stroke="#e8fffc" stroke-width="1.3" stroke-dasharray="1.6 0.7"/><rect y="27.5" width="19" height="8.5" fill="#f2fffd"/><path d="M5 29.7 H14 M6.5 31.2 H12.5" stroke="#9ab" stroke-width="0.7"/><path d="M3.5 33.4 H15.5" stroke="#567" stroke-width="1"/></svg>
<div style="left:399.22px;top:151.08px;width:18.57px;height:12.03px;background:#585858;"></div>
<div class="t" id="t74" style="top:151.08px;font-size:10.5px;line-height:12.6px;color:#f4f4f4;left:403.48px;transform:scaleX(0.938);transform-origin:0 50%;">20</div>
<div class="t" id="t75" style="top:205.77px;font-size:10.5px;line-height:12.6px;color:#f0f0f0;left:413.83px;transform:scaleX(0.924);transform-origin:0 50%;">2 sec.</div>
<svg style="left:441.84px;top:210.12px;width:6.7px;height:4.48px;" viewBox="0 0 4.4 3.2" preserveAspectRatio="none"><path d="M0 0 H4.6 L2.3 3.2 Z" fill="#f2f2f2"/></svg>
<div style="left:453.25px;top:144.79px;width:1px;height:74.84px;background:#3e3e3e"></div>
<div style="left:459.95px;top:150.8px;width:49.92px;height:52.32px;background:#595959;border:1px solid #676767;"></div>
<svg style="left:469.69px;top:151.5px;width:28.92px;height:50.22px;" viewBox="0 0 19 35.9" preserveAspectRatio="none"><rect width="19" height="36" fill="#050505"/><path d="M7 11.5 H11 M8 13.6 H11.5" stroke="#9fe" stroke-width="0.7"/><rect x="0.5" y="3.9" width="0.6" height="0.6" fill="#cfe"/><rect x="2.28" y="8.68" width="0.6" height="0.6" fill="#cfe"/><rect x="0.95" y="20.17" width="0.6" height="0.6" fill="#cfe"/><rect x="11.25" y="3.84" width="0.6" height="0.6" fill="#cfe"/><rect x="4.91" y="8.32" width="0.6" height="0.6" fill="#cfe"/><rect x="6.87" y="3.26" width="0.6" height="0.6" fill="#cfe"/><rect x="15.36" y="22.84" width="0.6" height="0.6" fill="#cfe"/><rect x="8.65" y="11.39" width="0.6" height="0.6" fill="#cfe"/><rect x="2" y="2.8" width="0.6" height="0.6" fill="#cfe"/><rect x="6.5" y="6.46" width="0.6" height="0.6" fill="#cfe"/><rect x="15" y="4.13" width="0.6" height="0.6" fill="#cfe"/><rect x="0.9" y="21.9" width="0.6" height="0.6" fill="#cfe"/><rect x="9.74" y="3.8" width="0.6" height="0.6" fill="#cfe"/><rect x="10.01" y="1.11" width="0.6" height="0.6" fill="#cfe"/><rect x="9.74" y="22.52" width="0.6" height="0.6" fill="#cfe"/><rect x="15.61" y="16.16" width="0.6" height="0.6" fill="#cfe"/><rect x="5.07" y="8.75" width="0.6" height="0.6" fill="#cfe"/><rect x="3.42" y="17.87" width="0.6" height="0.6" fill="#cfe"/><rect x="9.82" y="18.03" width="0.6" height="0.6" fill="#cfe"/><rect x="6.27" y="5.52" width="0.6" height="0.6" fill="#cfe"/><rect x="14.7" y="22.66" width="0.6" height="0.6" fill="#cfe"/><rect x="15.42" y="18.64" width="0.6" height="0.6" fill="#cfe"/><rect y="23.6" width="19" height="3.9" fill="#63d6c6"/><path d="M1 25.5 H18" stroke="#e8fffc" stroke-width="1.3" stroke-dasharray="1.6 0.7"/><rect y="27.5" width="19" height="8.5" fill="#f2fffd"/><path d="M5 29.7 H14 M6.5 31.2 H12.5" stroke="#9ab" stroke-width="0.7"/><path d="M3.5 33.4 H15.5" stroke="#567" stroke-width="1"/></svg>
<div style="left:460.56px;top:151.08px;width:18.57px;height:12.03px;background:#545454;"></div>
<div class="t" id="t76" style="top:151.08px;font-size:10.5px;line-height:12.6px;color:#f4f4f4;left:464.82px;transform:scaleX(0.938);transform-origin:0 50%;">21</div>
<div class="t" id="t77" style="top:205.77px;font-size:10.5px;line-height:12.6px;color:#f0f0f0;left:466.65px;transform:scaleX(0.935);transform-origin:0 50%;">0,3 sec.</div>
<svg style="left:503.18px;top:210.12px;width:6.7px;height:4.48px;" viewBox="0 0 4.4 3.2" preserveAspectRatio="none"><path d="M0 0 H4.6 L2.3 3.2 Z" fill="#f2f2f2"/></svg>
<div style="left:514.59px;top:144.79px;width:1px;height:74.84px;background:#3e3e3e"></div>
<div style="left:521.29px;top:150.8px;width:49.92px;height:52.32px;background:#595959;border:1px solid #676767;"></div>
<svg style="left:531.03px;top:151.5px;width:28.92px;height:50.22px;" viewBox="0 0 19 35.9" preserveAspectRatio="none"><rect width="19" height="36" fill="#050505"/><rect x="14.82" y="17.15" width="0.6" height="0.6" fill="#cfe"/><rect x="4.47" y="12.15" width="0.6" height="0.6" fill="#cfe"/><rect x="6.72" y="1.15" width="0.6" height="0.6" fill="#cfe"/><rect x="0.99" y="6.79" width="0.6" height="0.6" fill="#cfe"/><rect x="5.04" y="16.08" width="0.6" height="0.6" fill="#cfe"/><rect x="17.24" y="10.56" width="0.6" height="0.6" fill="#cfe"/><rect x="16.9" y="22.73" width="0.6" height="0.6" fill="#cfe"/><rect x="17.21" y="8.7" width="0.6" height="0.6" fill="#cfe"/><rect x="4.36" y="5.6" width="0.6" height="0.6" fill="#cfe"/><rect x="3.94" y="5.1" width="0.6" height="0.6" fill="#cfe"/><rect x="11.42" y="20.76" width="0.6" height="0.6" fill="#cfe"/><rect x="15.21" y="11.29" width="0.6" height="0.6" fill="#cfe"/><rect x="11.93" y="18.49" width="0.6" height="0.6" fill="#cfe"/><rect x="1.98" y="15.36" width="0.6" height="0.6" fill="#cfe"/><rect x="16.42" y="18.1" width="0.6" height="0.6" fill="#cfe"/><rect x="13.63" y="11.26" width="0.6" height="0.6" fill="#cfe"/><rect x="3.62" y="18.26" width="0.6" height="0.6" fill="#cfe"/><rect x="6.32" y="18.52" width="0.6" height="0.6" fill="#cfe"/><rect x="17.5" y="9.41" width="0.6" height="0.6" fill="#cfe"/><rect x="7.52" y="21.8" width="0.6" height="0.6" fill="#cfe"/><rect x="13.18" y="4.33" width="0.6" height="0.6" fill="#cfe"/><rect x="2.72" y="3.9" width="0.6" height="0.6" fill="#cfe"/><rect x="16.33" y="18.65" width="0.6" height="0.6" fill="#cfe"/><rect x="3.06" y="19.1" width="0.6" height="0.6" fill="#cfe"/><rect x="17.66" y="15.29" width="0.6" height="0.6" fill="#cfe"/><rect x="6.63" y="12.84" width="0.6" height="0.6" fill="#cfe"/><rect x="2.79" y="0.82" width="0.6" height="0.6" fill="#cfe"/><rect x="17.49" y="15.12" width="0.6" height="0.6" fill="#cfe"/><rect x="9.72" y="21.51" width="0.6" height="0.6" fill="#cfe"/><rect x="8.09" y="20.11" width="0.6" height="0.6" fill="#cfe"/><rect x="14.96" y="5.25" width="0.6" height="0.6" fill="#cfe"/><rect x="4.91" y="7.09" width="0.6" height="0.6" fill="#cfe"/><rect x="4.71" y="13.69" width="0.6" height="0.6" fill="#cfe"/><rect x="5.04" y="9.93" width="0.6" height="0.6" fill="#cfe"/><rect x="2.79" y="20.98" width="0.6" height="0.6" fill="#cfe"/><rect x="6.69" y="10.81" width="0.6" height="0.6" fill="#cfe"/><rect x="10.71" y="20.85" width="0.6" height="0.6" fill="#cfe"/><rect x="7.86" y="21.15" width="0.6" height="0.6" fill="#cfe"/><rect x="9.28" y="12.47" width="0.6" height="0.6" fill="#cfe"/><rect x="9.66" y="0.92" width="0.6" height="0.6" fill="#cfe"/><rect y="23.6" width="19" height="3.9" fill="#63d6c6"/><path d="M1 25.5 H18" stroke="#e8fffc" stroke-width="1.3" stroke-dasharray="1.6 0.7"/><rect y="27.5" width="19" height="8.5" fill="#f2fffd"/><path d="M5 29.7 H14 M6.5 31.2 H12.5" stroke="#9ab" stroke-width="0.7"/><path d="M3.5 33.4 H15.5" stroke="#567" stroke-width="1"/></svg>
<div style="left:521.9px;top:151.08px;width:18.57px;height:12.03px;background:#545454;"></div>
<div class="t" id="t78" style="top:151.08px;font-size:10.5px;line-height:12.6px;color:#f4f4f4;left:526.16px;transform:scaleX(0.938);transform-origin:0 50%;">22</div>
<div class="t" id="t79" style="top:205.77px;font-size:10.5px;line-height:12.6px;color:#f0f0f0;left:527.98px;transform:scaleX(0.935);transform-origin:0 50%;">0,3 sec.</div>
<svg style="left:564.51px;top:210.12px;width:6.7px;height:4.48px;" viewBox="0 0 4.4 3.2" preserveAspectRatio="none"><path d="M0 0 H4.6 L2.3 3.2 Z" fill="#f2f2f2"/></svg>
<div style="left:575.93px;top:144.79px;width:1px;height:74.84px;background:#3e3e3e"></div>
<div style="left:582.62px;top:150.8px;width:49.92px;height:52.32px;background:#595959;border:1px solid #676767;"></div>
<svg style="left:592.36px;top:151.5px;width:28.92px;height:50.22px;" viewBox="0 0 19 35.9" preserveAspectRatio="none"><rect width="19" height="36" fill="#050505"/><rect x="8.2" y="4.62" width="0.6" height="0.6" fill="#cfe"/><rect x="0.57" y="18.48" width="0.6" height="0.6" fill="#cfe"/><rect x="3.52" y="11.15" width="0.6" height="0.6" fill="#cfe"/><rect x="13.19" y="13.02" width="0.6" height="0.6" fill="#cfe"/><rect x="6.2" y="12.16" width="0.6" height="0.6" fill="#cfe"/><rect x="10.22" y="18.15" width="0.6" height="0.6" fill="#cfe"/><rect x="2.36" y="13.11" width="0.6" height="0.6" fill="#cfe"/><rect x="4.85" y="6.73" width="0.6" height="0.6" fill="#cfe"/><rect x="14.01" y="11.92" width="0.6" height="0.6" fill="#cfe"/><rect x="10.33" y="17.6" width="0.6" height="0.6" fill="#cfe"/><rect x="16.47" y="10.47" width="0.6" height="0.6" fill="#cfe"/><rect x="11.22" y="11.87" width="0.6" height="0.6" fill="#cfe"/><rect x="9.46" y="16.09" width="0.6" height="0.6" fill="#cfe"/><rect x="8.42" y="12.5" width="0.6" height="0.6" fill="#cfe"/><rect x="8.87" y="21.68" width="0.6" height="0.6" fill="#cfe"/><rect x="12.74" y="20.22" width="0.6" height="0.6" fill="#cfe"/><rect x="16.99" y="6.34" width="0.6" height="0.6" fill="#cfe"/><rect x="10.29" y="21.72" width="0.6" height="0.6" fill="#cfe"/><rect x="15.2" y="3.59" width="0.6" height="0.6" fill="#cfe"/><rect x="2.63" y="10.45" width="0.6" height="0.6" fill="#cfe"/><rect x="1.77" y="5.91" width="0.6" height="0.6" fill="#cfe"/><rect x="1.78" y="15.56" width="0.6" height="0.6" fill="#cfe"/><rect x="14.22" y="20.68" width="0.6" height="0.6" fill="#cfe"/><rect x="3.2" y="16.61" width="0.6" height="0.6" fill="#cfe"/><rect x="12.05" y="3.72" width="0.6" height="0.6" fill="#cfe"/><rect x="15.95" y="22.27" width="0.6" height="0.6" fill="#cfe"/><rect x="4.34" y="21.93" width="0.6" height="0.6" fill="#cfe"/><rect x="7.47" y="11.46" width="0.6" height="0.6" fill="#cfe"/><rect x="17.82" y="19.23" width="0.6" height="0.6" fill="#cfe"/><rect x="3.33" y="10.21" width="0.6" height="0.6" fill="#cfe"/><rect x="9.52" y="8.13" width="0.6" height="0.6" fill="#cfe"/><rect x="3.93" y="7.67" width="0.6" height="0.6" fill="#cfe"/><rect x="13.14" y="0.94" width="0.6" height="0.6" fill="#cfe"/><rect x="10.2" y="10.41" width="0.6" height="0.6" fill="#cfe"/><rect x="0.82" y="7.96" width="0.6" height="0.6" fill="#cfe"/><rect x="11.42" y="12.03" width="0.6" height="0.6" fill="#cfe"/><rect x="1.63" y="22.66" width="0.6" height="0.6" fill="#cfe"/><rect x="14.3" y="22.36" width="0.6" height="0.6" fill="#cfe"/><rect x="2.33" y="6.48" width="0.6" height="0.6" fill="#cfe"/><rect x="1.19" y="18.03" width="0.6" height="0.6" fill="#cfe"/><rect x="5.23" y="3.42" width="0.6" height="0.6" fill="#cfe"/><rect x="7.89" y="21.01" width="0.6" height="0.6" fill="#cfe"/><rect x="14.83" y="6.32" width="0.6" height="0.6" fill="#cfe"/><rect x="3.11" y="21.18" width="0.6" height="0.6" fill="#cfe"/><rect x="10.49" y="16.26" width="0.6" height="0.6" fill="#cfe"/><rect x="2.07" y="1.79" width="0.6" height="0.6" fill="#cfe"/><rect y="23.6" width="19" height="3.9" fill="#63d6c6"/><path d="M1 25.5 H18" stroke="#e8fffc" stroke-width="1.3" stroke-dasharray="1.6 0.7"/><rect y="27.5" width="19" height="8.5" fill="#f2fffd"/><path d="M5 29.7 H14 M6.5 31.2 H12.5" stroke="#9ab" stroke-width="0.7"/><path d="M3.5 33.4 H15.5" stroke="#567" stroke-width="1"/></svg>
<div style="left:583.23px;top:151.08px;width:18.57px;height:12.03px;background:#545454;"></div>
<div class="t" id="t80" style="top:151.08px;font-size:10.5px;line-height:12.6px;color:#f4f4f4;left:587.49px;transform:scaleX(0.938);transform-origin:0 50%;">23</div>
<div class="t" id="t81" style="top:205.77px;font-size:10.5px;line-height:12.6px;color:#f0f0f0;left:589.32px;transform:scaleX(0.935);transform-origin:0 50%;">0,3 sec.</div>
<svg style="left:625.85px;top:210.12px;width:6.7px;height:4.48px;" viewBox="0 0 4.4 3.2" preserveAspectRatio="none"><path d="M0 0 H4.6 L2.3 3.2 Z" fill="#f2f2f2"/></svg>
<div style="left:637.26px;top:144.79px;width:1px;height:74.84px;background:#3e3e3e"></div>
<div style="left:643.96px;top:150.8px;width:49.92px;height:52.32px;background:#595959;border:1px solid #676767;"></div>
<svg style="left:653.7px;top:151.5px;width:28.92px;height:50.22px;" viewBox="0 0 19 35.9" preserveAspectRatio="none"><rect width="19" height="36" fill="#050505"/><rect x="12.54" y="10.07" width="0.6" height="0.6" fill="#cfe"/><rect x="1.77" y="21.61" width="0.6" height="0.6" fill="#cfe"/><rect x="11.6" y="18.54" width="0.6" height="0.6" fill="#cfe"/><rect x="1.97" y="19.77" width="0.6" height="0.6" fill="#cfe"/><rect x="1.67" y="19.91" width="0.6" height="0.6" fill="#cfe"/><rect x="8.44" y="8.13" width="0.6" height="0.6" fill="#cfe"/><rect x="10.18" y="21.35" width="0.6" height="0.6" fill="#cfe"/><rect x="5.19" y="3.41" width="0.6" height="0.6" fill="#cfe"/><rect x="9.72" y="5.86" width="0.6" height="0.6" fill="#cfe"/><rect x="2.42" y="4.13" width="0.6" height="0.6" fill="#cfe"/><rect x="1.38" y="5.04" width="0.6" height="0.6" fill="#cfe"/><rect x="5.96" y="7.36" width="0.6" height="0.6" fill="#cfe"/><rect x="13.79" y="7.02" width="0.6" height="0.6" fill="#cfe"/><rect x="9.25" y="4.5" width="0.6" height="0.6" fill="#cfe"/><rect x="6.57" y="0.91" width="0.6" height="0.6" fill="#cfe"/><rect x="4.88" y="0.85" width="0.6" height="0.6" fill="#cfe"/><rect x="13.33" y="12.9" width="0.6" height="0.6" fill="#cfe"/><rect x="3.82" y="11.18" width="0.6" height="0.6" fill="#cfe"/><rect x="16.86" y="2.89" width="0.6" height="0.6" fill="#cfe"/><rect x="14.83" y="10.22" width="0.6" height="0.6" fill="#cfe"/><path d="M5 10 L13 17 M12 8 L7 18 M4 14 L14 12 M9 7 L10 19" stroke="#eee" stroke-width="0.8"/><rect y="23.6" width="19" height="3.9" fill="#63d6c6"/><path d="M1 25.5 H18" stroke="#e8fffc" stroke-width="1.3" stroke-dasharray="1.6 0.7"/><rect y="27.5" width="19" height="8.5" fill="#f2fffd"/><path d="M5 29.7 H14 M6.5 31.2 H12.5" stroke="#9ab" stroke-width="0.7"/><path d="M3.5 33.4 H15.5" stroke="#567" stroke-width="1"/></svg>
<div style="left:644.57px;top:151.08px;width:18.57px;height:12.03px;background:#545454;"></div>
<div class="t" id="t82" style="top:151.08px;font-size:10.5px;line-height:12.6px;color:#f4f4f4;left:648.83px;transform:scaleX(0.938);transform-origin:0 50%;">24</div>
<div class="t" id="t83" style="top:205.77px;font-size:10.5px;line-height:12.6px;color:#f0f0f0;left:650.66px;transform:scaleX(0.935);transform-origin:0 50%;">0,3 sec.</div>
<svg style="left:687.19px;top:210.12px;width:6.7px;height:4.48px;" viewBox="0 0 4.4 3.2" preserveAspectRatio="none"><path d="M0 0 H4.6 L2.3 3.2 Z" fill="#f2f2f2"/></svg>
<div style="left:698.6px;top:144.79px;width:1px;height:74.84px;background:#3e3e3e"></div>
<div style="left:705.3px;top:150.8px;width:49.92px;height:52.32px;background:#595959;border:1px solid #676767;"></div>
<svg style="left:715.04px;top:151.5px;width:28.92px;height:50.22px;" viewBox="0 0 19 35.9" preserveAspectRatio="none"><rect width="19" height="36" fill="#050505"/><rect x="9.16" y="19.28" width="0.6" height="0.6" fill="#cfe"/><rect x="7.38" y="11.9" width="0.6" height="0.6" fill="#cfe"/><rect x="12.54" y="22.6" width="0.6" height="0.6" fill="#cfe"/><rect x="6.5" y="19.23" width="0.6" height="0.6" fill="#cfe"/><rect x="12.87" y="14.81" width="0.6" height="0.6" fill="#cfe"/><rect x="7.58" y="8.32" width="0.6" height="0.6" fill="#cfe"/><rect x="1.45" y="3.42" width="0.6" height="0.6" fill="#cfe"/><rect x="1.74" y="17.17" width="0.6" height="0.6" fill="#cfe"/><rect x="4.97" y="4.17" width="0.6" height="0.6" fill="#cfe"/><rect x="1.98" y="19.43" width="0.6" height="0.6" fill="#cfe"/><rect x="15.73" y="15.59" width="0.6" height="0.6" fill="#cfe"/><rect x="5.43" y="5.95" width="0.6" height="0.6" fill="#cfe"/><rect x="5.63" y="10.84" width="0.6" height="0.6" fill="#cfe"/><rect x="3.26" y="10.53" width="0.6" height="0.6" fill="#cfe"/><rect y="23.6" width="19" height="3.9" fill="#63d6c6"/><path d="M1 25.5 H18" stroke="#e8fffc" stroke-width="1.3" stroke-dasharray="1.6 0.7"/><rect y="27.5" width="19" height="8.5" fill="#f2fffd"/><path d="M5 29.7 H14 M6.5 31.2 H12.5" stroke="#9ab" stroke-width="0.7"/><path d="M3.5 33.4 H15.5" stroke="#567" stroke-width="1"/></svg>
<div style="left:705.91px;top:151.08px;width:18.57px;height:12.03px;background:#545454;"></div>
<div class="t" id="t84" style="top:151.08px;font-size:10.5px;line-height:12.6px;color:#f4f4f4;left:710.17px;transform:scaleX(0.938);transform-origin:0 50%;">25</div>
<div class="t" id="t85" style="top:205.77px;font-size:10.5px;line-height:12.6px;color:#f0f0f0;left:711.99px;transform:scaleX(0.935);transform-origin:0 50%;">0,3 sec.</div>
<svg style="left:748.52px;top:210.12px;width:6.7px;height:4.48px;" viewBox="0 0 4.4 3.2" preserveAspectRatio="none"><path d="M0 0 H4.6 L2.3 3.2 Z" fill="#f2f2f2"/></svg>
<div style="left:759.94px;top:144.79px;width:1px;height:74.84px;background:#3e3e3e"></div>
<div style="left:766.63px;top:150.8px;width:49.92px;height:52.32px;background:#595959;border:1px solid #676767;"></div>
<svg style="left:776.38px;top:151.5px;width:28.92px;height:50.22px;" viewBox="0 0 19 35.9" preserveAspectRatio="none"><rect width="19" height="36" fill="#050505"/><rect x="5.11" y="22.14" width="0.6" height="0.6" fill="#cfe"/><rect x="17.52" y="12.81" width="0.6" height="0.6" fill="#cfe"/><rect x="4.78" y="22.23" width="0.6" height="0.6" fill="#cfe"/><rect x="5.92" y="8.52" width="0.6" height="0.6" fill="#cfe"/><rect y="23.6" width="19" height="3.9" fill="#63d6c6"/><path d="M1 25.5 H18" stroke="#e8fffc" stroke-width="1.3" stroke-dasharray="1.6 0.7"/><rect y="27.5" width="19" height="8.5" fill="#f2fffd"/><path d="M5 29.7 H14 M6.5 31.2 H12.5" stroke="#9ab" stroke-width="0.7"/><path d="M3.5 33.4 H15.5" stroke="#567" stroke-width="1"/></svg>
<div style="left:767.24px;top:151.08px;width:18.57px;height:12.03px;background:#545454;"></div>
<div class="t" id="t86" style="top:151.08px;font-size:10.5px;line-height:12.6px;color:#f4f4f4;left:771.5px;transform:scaleX(0.938);transform-origin:0 50%;">26</div>
<div class="t" id="t87" style="top:205.77px;font-size:10.5px;line-height:12.6px;color:#f0f0f0;left:773.33px;transform:scaleX(0.935);transform-origin:0 50%;">0,3 sec.</div>
<svg style="left:809.86px;top:210.12px;width:6.7px;height:4.48px;" viewBox="0 0 4.4 3.2" preserveAspectRatio="none"><path d="M0 0 H4.6 L2.3 3.2 Z" fill="#f2f2f2"/></svg>
<div style="left:821.27px;top:144.79px;width:1px;height:74.84px;background:#3e3e3e"></div>
<div style="left:827.97px;top:150.8px;width:49.92px;height:52.32px;background:#595959;border:1px solid #676767;"></div>
<svg style="left:837.71px;top:151.5px;width:28.92px;height:50.22px;" viewBox="0 0 19 35.9" preserveAspectRatio="none"><rect width="19" height="36" fill="#050505"/><rect x="0.52" y="9.09" width="0.6" height="0.6" fill="#cfe"/><rect x="8.81" y="11.81" width="0.6" height="0.6" fill="#cfe"/><rect x="4.02" y="11.86" width="0.6" height="0.6" fill="#cfe"/><rect x="0.59" y="6.44" width="0.6" height="0.6" fill="#cfe"/><rect y="23.6" width="19" height="3.9" fill="#63d6c6"/><path d="M1 25.5 H18" stroke="#e8fffc" stroke-width="1.3" stroke-dasharray="1.6 0.7"/><rect y="27.5" width="19" height="8.5" fill="#f2fffd"/><path d="M5 29.7 H14 M6.5 31.2 H12.5" stroke="#9ab" stroke-width="0.7"/><path d="M3.5 33.4 H15.5" stroke="#567" stroke-width="1"/></svg>
<div style="left:828.58px;top:151.08px;width:18.57px;height:12.03px;background:#545454;"></div>
<div class="t" id="t88" style="top:151.08px;font-size:10.5px;line-height:12.6px;color:#f4f4f4;left:832.84px;transform:scaleX(0.938);transform-origin:0 50%;">27</div>
<div class="t" id="t89" style="top:205.77px;font-size:10.5px;line-height:12.6px;color:#f0f0f0;left:834.67px;transform:scaleX(0.935);transform-origin:0 50%;">0,3 sec.</div>
<svg style="left:871.2px;top:210.12px;width:6.7px;height:4.48px;" viewBox="0 0 4.4 3.2" preserveAspectRatio="none"><path d="M0 0 H4.6 L2.3 3.2 Z" fill="#f2f2f2"/></svg>
<div style="left:882.61px;top:144.79px;width:1px;height:74.84px;background:#3e3e3e"></div>
<div style="left:889.31px;top:150.8px;width:49.92px;height:52.32px;background:#595959;border:1px solid #676767;"></div>
<svg style="left:899.05px;top:151.5px;width:28.92px;height:50.22px;" viewBox="0 0 19 35.9" preserveAspectRatio="none"><rect width="19" height="36" fill="#050505"/><rect x="2.07" y="9.49" width="0.6" height="0.6" fill="#cfe"/><rect x="1.23" y="1.01" width="0.6" height="0.6" fill="#cfe"/><rect y="23.6" width="19" height="3.9" fill="#63d6c6"/><path d="M1 25.5 H18" stroke="#e8fffc" stroke-width="1.3" stroke-dasharray="1.6 0.7"/><rect y="27.5" width="19" height="8.5" fill="#f2fffd"/><path d="M5 29.7 H14 M6.5 31.2 H12.5" stroke="#9ab" stroke-width="0.7"/><path d="M3.5 33.4 H15.5" stroke="#567" stroke-width="1"/></svg>
<div style="left:889.92px;top:151.08px;width:18.57px;height:12.03px;background:#545454;"></div>
<div class="t" id="t90" style="top:151.08px;font-size:10.5px;line-height:12.6px;color:#f4f4f4;left:894.18px;transform:scaleX(0.938);transform-origin:0 50%;">28</div>
<div class="t" id="t91" style="top:205.77px;font-size:10.5px;line-height:12.6px;color:#f0f0f0;left:896px;transform:scaleX(0.935);transform-origin:0 50%;">0,3 sec.</div>
<svg style="left:932.53px;top:210.12px;width:6.7px;height:4.48px;" viewBox="0 0 4.4 3.2" preserveAspectRatio="none"><path d="M0 0 H4.6 L2.3 3.2 Z" fill="#f2f2f2"/></svg>
<div style="left:943.95px;top:144.79px;width:1px;height:74.84px;background:#3e3e3e"></div>
<div style="left:950.64px;top:150.8px;width:49.92px;height:52.32px;background:#595959;border:1px solid #676767;"></div>
<svg style="left:960.39px;top:151.5px;width:28.92px;height:50.22px;" viewBox="0 0 19 35.9" preserveAspectRatio="none"><rect width="19" height="36" fill="#050505"/><rect x="5.82" y="5.74" width="0.6" height="0.6" fill="#cfe"/><rect y="23.6" width="19" height="3.9" fill="#63d6c6"/><path d="M1 25.5 H18" stroke="#e8fffc" stroke-width="1.3" stroke-dasharray="1.6 0.7"/><rect y="27.5" width="19" height="8.5" fill="#f2fffd"/><path d="M5 29.7 H14 M6.5 31.2 H12.5" stroke="#9ab" stroke-width="0.7"/><path d="M3.5 33.4 H15.5" stroke="#567" stroke-width="1"/></svg>
<div style="left:951.25px;top:151.08px;width:18.57px;height:12.03px;background:#545454;"></div>
<div class="t" id="t92" style="top:151.08px;font-size:10.5px;line-height:12.6px;color:#f4f4f4;left:955.52px;transform:scaleX(0.938);transform-origin:0 50%;">29</div>
<div class="t" id="t93" style="top:205.77px;font-size:10.5px;line-height:12.6px;color:#f0f0f0;left:957.34px;transform:scaleX(0.935);transform-origin:0 50%;">0,3 sec.</div>
<svg style="left:993.87px;top:210.12px;width:6.7px;height:4.48px;" viewBox="0 0 4.4 3.2" preserveAspectRatio="none"><path d="M0 0 H4.6 L2.3 3.2 Z" fill="#f2f2f2"/></svg>
<div style="left:1005.28px;top:144.79px;width:1px;height:74.84px;background:#3e3e3e"></div>
<div style="left:1011.98px;top:150.8px;width:49.92px;height:52.32px;background:#595959;border:1px solid #676767;"></div>
<svg style="left:1021.72px;top:151.5px;width:28.92px;height:50.22px;" viewBox="0 0 19 35.9" preserveAspectRatio="none"><rect width="19" height="36" fill="#050505"/><rect y="23.6" width="19" height="3.9" fill="#63d6c6"/><path d="M1 25.5 H18" stroke="#e8fffc" stroke-width="1.3" stroke-dasharray="1.6 0.7"/><rect y="27.5" width="19" height="8.5" fill="#f2fffd"/><path d="M5 29.7 H14 M6.5 31.2 H12.5" stroke="#9ab" stroke-width="0.7"/><path d="M3.5 33.4 H15.5" stroke="#567" stroke-width="1"/></svg>
<div style="left:1012.59px;top:151.08px;width:18.57px;height:12.03px;background:#545454;"></div>
<div class="t" id="t94" style="top:151.08px;font-size:10.5px;line-height:12.6px;color:#f4f4f4;left:1016.85px;transform:scaleX(0.938);transform-origin:0 50%;">30</div>
<div class="t" id="t95" style="top:205.77px;font-size:10.5px;line-height:12.6px;color:#f0f0f0;left:1018.68px;transform:scaleX(0.935);transform-origin:0 50%;">0,3 sec.</div>
<svg style="left:1055.21px;top:210.12px;width:6.7px;height:4.48px;" viewBox="0 0 4.4 3.2" preserveAspectRatio="none"><path d="M0 0 H4.6 L2.3 3.2 Z" fill="#f2f2f2"/></svg>
<div style="left:1066.62px;top:144.79px;width:1px;height:74.84px;background:#3e3e3e"></div>
<div style="left:1073.32px;top:150.8px;width:49.92px;height:52.32px;background:#595959;border:1px solid #676767;"></div>
<svg style="left:1083.06px;top:151.5px;width:28.92px;height:50.22px;" viewBox="0 0 19 35.9" preserveAspectRatio="none"><rect width="19" height="36" fill="#050505"/><rect y="23.6" width="19" height="3.9" fill="#63d6c6"/><path d="M1 25.5 H18" stroke="#e8fffc" stroke-width="1.3" stroke-dasharray="1.6 0.7"/><rect y="27.5" width="19" height="8.5" fill="#f2fffd"/><path d="M5 29.7 H14 M6.5 31.2 H12.5" stroke="#9ab" stroke-width="0.7"/><path d="M3.5 33.4 H15.5" stroke="#567" stroke-width="1"/></svg>
<div style="left:1073.93px;top:151.08px;width:18.57px;height:12.03px;background:#545454;"></div>
<div class="t" id="t96" style="top:151.08px;font-size:10.5px;line-height:12.6px;color:#f4f4f4;left:1078.19px;transform:scaleX(0.938);transform-origin:0 50%;">31</div>
<div class="t" id="t97" style="top:205.77px;font-size:10.5px;line-height:12.6px;color:#f0f0f0;left:1080.02px;transform:scaleX(0.935);transform-origin:0 50%;">0,3 sec.</div>
<svg style="left:1116.54px;top:210.12px;width:6.7px;height:4.48px;" viewBox="0 0 4.4 3.2" preserveAspectRatio="none"><path d="M0 0 H4.6 L2.3 3.2 Z" fill="#f2f2f2"/></svg>
<div style="left:88.28px;top:219.63px;width:307.45px;height:21.68px;background:#535353;"></div>
<div style="left:88.28px;top:219.63px;width:307.45px;height:1px;background:#3c3c3c"></div>
<div style="left:395.72px;top:219.63px;width:732.85px;height:21.68px;background:#3c3c3c;"></div>
<div style="left:119.48px;top:220.33px;width:1px;height:20.98px;background:#3a3a3a"></div>
<div style="left:189.03px;top:220.33px;width:1px;height:20.98px;background:#3a3a3a"></div>
<div style="left:306.68px;top:220.33px;width:1px;height:20.98px;background:#3a3a3a"></div>
<div style="left:395.72px;top:220.33px;width:1px;height:20.98px;background:#3a3a3a"></div>
<svg style="left:95.89px;top:224.52px;width:15.98px;height:12.73px;" viewBox="0 0 10.5 9.1" preserveAspectRatio="none"><g stroke="#dcdcdc" stroke-width="1" fill="none"><path d="M0 1.2 H3 M5 1.2 H10.5 M0 4.4 H3 M5 4.4 H9 M0 7.6 H3 M5 7.6 H10.5"/><path d="M4 0 V9"/></g></svg>
<div class="t" id="t98" style="top:224.52px;font-size:10.5px;line-height:12.6px;color:#f0f0f0;left:128.31px;transform:scaleX(0.967);transform-origin:0 50%;">Forever</div>
<svg style="left:177.77px;top:228.86px;width:7px;height:4.48px;" viewBox="0 0 4.6 3.2" preserveAspectRatio="none"><path d="M0 0 H4.6 L2.3 3.2 Z" fill="#d8d8d8"/></svg>
<svg style="left:195.58px;top:226.62px;width:16.74px;height:8.39px;" viewBox="0 0 11 6" preserveAspectRatio="none"><path d="M5.2 0 V6 L0.2 3 Z M10.6 0 V6 L5.6 3 Z" fill="#c9c9c9"/></svg>
<svg style="left:226.78px;top:226.62px;width:9.89px;height:8.39px;" viewBox="0 0 6.5 6" preserveAspectRatio="none"><path d="M6 0 V6 L0.4 3 Z" fill="#c9c9c9"/></svg>
<svg style="left:257.22px;top:226.62px;width:9.89px;height:8.39px;" viewBox="0 0 6.5 6" preserveAspectRatio="none"><path d="M0.4 0 V6 L6 3 Z" fill="#c9c9c9"/></svg>
<svg style="left:283.09px;top:226.62px;width:16.74px;height:8.39px;" viewBox="0 0 11 6" preserveAspectRatio="none"><path d="M0.2 0 V6 L5.2 3 Z M5.6 0 V6 L10.6 3 Z" fill="#c9c9c9"/></svg>
<svg style="left:313.53px;top:224.52px;width:16.74px;height:13.29px;" viewBox="0 0 11 9.5" preserveAspectRatio="none"><path d="M0.8 0.8 L3 0.4 L10 7.6 L8.6 9 L1 2.6 Z" fill="#c4c4c4"/><circle cx="2" cy="1.6" r="1.4" fill="#dedede"/></svg>
<svg style="left:344.73px;top:224.94px;width:12.94px;height:12.59px;" viewBox="0 0 8.5 9" preserveAspectRatio="none"><path d="M0.5 0.5 H8 V8.5 H3.6 L0.5 5.6 Z" fill="#bcbcbc"/><path d="M0.5 5.6 H3.6 V8.5 Z" fill="#6a6a6a"/></svg>
<svg style="left:372.13px;top:224.38px;width:13.7px;height:13.43px;" viewBox="0 0 9 9.6" preserveAspectRatio="none"><path d="M0.6 2 H8.4 M3 2 V0.8 H6 V2" stroke="#8c8c8c" stroke-width="1" fill="none"/><path d="M1.4 3 H7.6 L7 9.3 H2 Z" fill="#8c8c8c"/></svg>
<svg style="left:400.29px;top:227.18px;width:4.57px;height:6.71px;" viewBox="0 0 3 4.8" preserveAspectRatio="none"><path d="M2.6 0 V4.8 L0.2 2.4 Z" fill="#e8e8e8"/></svg>
<div style="left:631.63px;top:224.66px;width:259.96px;height:12.45px;background:linear-gradient(#a2a2a2,#7e7e7e);border-radius:3px;border:1px solid #4a4a4a;"></div>
<svg style="left:1098.89px;top:227.18px;width:4.57px;height:6.71px;" viewBox="0 0 3 4.8" preserveAspectRatio="none"><path d="M0.4 0 V4.8 L2.8 2.4 Z" fill="#e8e8e8"/></svg>
<div style="left:1108.02px;top:221.03px;width:20.55px;height:20.28px;background:#565656;"></div>
<div style="left:1141.05px;top:85.61px;width:224.95px;height:591.32px;background:#2e2e2e;border-radius:4px 0 0 0;"></div>
<div style="left:1142.42px;top:86.45px;width:223.58px;height:13.15px;background:#3b3b3b;border-radius:3px 0 0 0;"></div>
<svg style="left:1337.23px;top:90.37px;width:9.13px;height:6.16px;" viewBox="0 0 6 4.4" preserveAspectRatio="none"><path d="M2.6 0 L0.2 2.2 L2.6 4.4 Z M5.6 0 L3.2 2.2 L5.6 4.4 Z" fill="#dedede"/></svg>
<svg style="left:1353.37px;top:90.09px;width:8.52px;height:6.71px;" viewBox="0 0 5.6 4.8" preserveAspectRatio="none"><path d="M0.6 0.5 L5 4.3 M5 0.5 L0.6 4.3" stroke="#e6e6e6" stroke-width="1.1" fill="none"/></svg>
<div style="left:1142.42px;top:99.6px;width:223.58px;height:17.35px;background:#434343;"></div>
<div style="left:1142.42px;top:99.88px;width:31.05px;height:16.51px;background:#454545;border-right:1px solid #303030;"></div>
<div class="t" id="t99" style="top:101.96px;font-size:11px;line-height:13.2px;color:#a8a8a8;left:1149.11px;transform:scaleX(0.974);transform-origin:0 50%;">3D</div>
<div style="left:1173.47px;top:99.88px;width:42.62px;height:17.35px;background:#535353;border-right:1px solid #303030;"></div>
<div class="t" id="t100" style="top:101.96px;font-size:11px;line-height:13.2px;color:#f6f6f6;font-weight:700;left:1180.01px;transform:scaleX(0.815);transform-origin:0 50%;">Layers</div>
<div style="left:1216.08px;top:99.88px;width:57.08px;height:16.51px;background:#454545;border-right:1px solid #303030;"></div>
<div class="t" id="t101" style="top:101.96px;font-size:11px;line-height:13.2px;color:#b0b0b0;left:1222.93px;transform:scaleX(0.884);transform-origin:0 50%;">Channels</div>
<svg style="left:1347.74px;top:104.92px;width:13.7px;height:7.41px;" viewBox="0 0 9 5.3" preserveAspectRatio="none"><path d="M0 1.6 H3 L1.5 3.6 Z" fill="#dcdcdc"/><path d="M4 0.6 H9 M4 2 H9 M4 3.4 H9 M4 4.8 H9" stroke="#b4b4b4" stroke-width="0.8"/></svg>
<div style="left:1142.42px;top:116.95px;width:223.58px;height:112.19px;background:#535353;"></div>
<div style="left:1147.59px;top:121.7px;width:68.79px;height:18.47px;background:linear-gradient(#727272,#646464);border:1px solid #3a3a3a;border-radius:2px;"></div>
<svg style="left:1152.92px;top:125.62px;width:10.65px;height:11.19px;" viewBox="0 0 7 8" preserveAspectRatio="none"><circle cx="4.3" cy="2.8" r="2.1" fill="none" stroke="#e8e8e8" stroke-width="1"/><path d="M2.8 4.4 L0.6 7.4" stroke="#e8e8e8" stroke-width="1.1"/></svg>
<div class="t" id="t102" style="top:124.34px;font-size:11px;line-height:13.2px;color:#f4f4f4;left:1168.6px;transform:scaleX(0.933);transform-origin:0 50%;">Kind</div>
<svg style="left:1205.73px;top:125.9px;width:7.61px;height:10.07px;" viewBox="0 0 5 7.2" preserveAspectRatio="none"><path d="M0.4 2.8 L2.5 0.2 L4.6 2.8 Z M0.4 4.4 L2.5 7 L4.6 4.4 Z" fill="#f0f0f0"/></svg>
<svg style="left:1229.02px;top:124.5px;width:14.46px;height:13.15px;opacity:.82;" viewBox="0 0 9.5 9.4" preserveAspectRatio="none"><rect x="0.6" y="0.6" width="8.3" height="8.2" fill="#6e6e6e" stroke="#c4c4c4" stroke-width="1"/><path d="M1.6 7.6 L4 4.4 L5.6 6.2 L6.6 5.2 L8 7.6 Z" fill="#d8d8d8"/><circle cx="6.6" cy="3" r="0.9" fill="#d8d8d8"/></svg>
<svg style="left:1253.83px;top:125.34px;width:12.48px;height:11.47px;opacity:.82;" viewBox="0 0 8.2 8.2" preserveAspectRatio="none"><circle cx="4.1" cy="4.1" r="3.5" fill="#8a8a8a" stroke="#d0d0d0" stroke-width="1"/><path d="M1.7 6.6 A3.5 3.5 0 0 1 6.6 1.7 Z" fill="#e0e0e0"/></svg>
<div class="t" id="t103" style="top:121.96px;font-size:14.5px;line-height:17.4px;color:#c4c4c4;font-family:'Liberation Serif',serif;left:1277.57px;transform:scaleX(1.340);transform-origin:0 50%;">T</div>
<svg style="left:1300.71px;top:125.06px;width:14px;height:12.31px;opacity:.82;" viewBox="0 0 9.2 8.8" preserveAspectRatio="none"><rect x="1.6" y="1.6" width="6" height="5.6" fill="none" stroke="#cfcfcf" stroke-width="1"/><g fill="#e0e0e0"><rect x="0.4" y="0.4" width="2.2" height="2.2"/><rect x="6.6" y="0.4" width="2.2" height="2.2"/><rect x="0.4" y="6.2" width="2.2" height="2.2"/><rect x="6.6" y="6.2" width="2.2" height="2.2"/></g></svg>
<svg style="left:1324.91px;top:124.5px;width:14.46px;height:13.15px;opacity:.82;" viewBox="0 0 9.5 9.4" preserveAspectRatio="none"><rect x="0.6" y="4.4" width="5.2" height="4.4" fill="#d4d4d4"/><path d="M4.2 4.2 V2.6 A2 2 0 0 1 8.2 2.6 V8.6 H6" fill="none" stroke="#d4d4d4" stroke-width="1.2"/></svg>
<div style="left:1351.54px;top:123.66px;width:8.22px;height:7.27px;background:#8c8c8c;border-radius:1.5px 1.5px 0 0;"></div>
<div style="left:1351.54px;top:130.94px;width:8.22px;height:7.55px;background:#2f2f2f;border-radius:0 0 1.5px 1.5px;"></div>
<div style="left:1142.42px;top:144.93px;width:223.58px;height:1px;background:#474747"></div>
<div style="left:1142.42px;top:145.77px;width:223.58px;height:1px;background:#5d5d5d"></div>
<div style="left:1147.59px;top:149.68px;width:110.04px;height:18.47px;background:#5b5b5b;border:1px solid #474747;border-radius:2px;"></div>
<div class="t" id="t104" style="top:152.6px;font-size:11px;line-height:13.2px;color:#9c9c9c;left:1155.2px;transform:scaleX(0.880);transform-origin:0 50%;">Normal</div>
<svg style="left:1248.35px;top:154.16px;width:6.7px;height:10.07px;" viewBox="0 0 4.4 7.2" preserveAspectRatio="none"><path d="M0.4 2.8 L2.2 0.4 L4 2.8 Z M0.4 4.4 L2.2 6.8 L4 4.4 Z" fill="#9a9a9a"/></svg>
<div class="t" id="t105" style="top:152.32px;font-size:11px;line-height:13.2px;color:#b0b0b0;left:1264.79px;transform:scaleX(0.924);transform-origin:0 50%;">Opacity:</div>
<div style="left:1307.4px;top:149.68px;width:35.01px;height:18.47px;background:#4b4b4b;border:1px solid #444;"></div>
<div class="t" id="t106" style="top:152.9px;font-size:10.5px;line-height:12.6px;color:#737373;left:1313.49px;transform:scaleX(0.907);transform-origin:0 50%;">100%</div>
<div style="left:1342.41px;top:149.68px;width:18.57px;height:18.47px;background:#636363;border:1px solid #474747;border-radius:0 2px 2px 0;"></div>
<svg style="left:1348.5px;top:157.52px;width:6.09px;height:3.64px;" viewBox="0 0 4 2.6" preserveAspectRatio="none"><path d="M0 0 H4 L2 2.6 Z" fill="#a6a6a6"/></svg>
<div style="left:1142.42px;top:171.65px;width:223.58px;height:1px;background:#474747"></div>
<div style="left:1142.42px;top:172.49px;width:223.58px;height:1px;background:#5d5d5d"></div>
<div class="t" id="t107" style="top:179.73px;font-size:11px;line-height:13.2px;color:#e2e2e2;left:1148.81px;transform:scaleX(0.947);transform-origin:0 50%;">Unify:</div>
<svg style="left:1180.32px;top:178.5px;width:18.26px;height:17.35px;" viewBox="0 0 12 12.4" preserveAspectRatio="none"><path d="M6.4 0.8 L9.4 3.8 L7.6 4.2 L5.6 6.6 L5.4 8.4 L2 5 L3.8 4.8 L6 2.6 Z" fill="#d4d4d4"/><path d="M3.6 6.8 L0.8 9.8" stroke="#d4d4d4" stroke-width="1"/><text x="5.6" y="11.6" font-size="4.6" font-family="Liberation Sans,sans-serif" fill="#d0d0d0" textLength="5" lengthAdjust="spacingAndGlyphs">co</text></svg>
<svg style="left:1203.15px;top:178.5px;width:18.26px;height:17.35px;" viewBox="0 0 12 12.4" preserveAspectRatio="none"><ellipse cx="4.8" cy="4.6" rx="4.2" ry="2.7" fill="none" stroke="#cfcfcf" stroke-width="1"/><circle cx="4.8" cy="4.6" r="1.3" fill="#cfcfcf"/><text x="6" y="11.6" font-size="4.6" font-family="Liberation Sans,sans-serif" fill="#d0d0d0" textLength="5" lengthAdjust="spacingAndGlyphs">co</text></svg>
<svg style="left:1224.45px;top:178.5px;width:19.03px;height:17.35px;" viewBox="0 0 12.5 12.4" preserveAspectRatio="none"><text x="0.2" y="8.6" font-size="10.5" font-style="italic" font-family="Liberation Serif,serif" fill="#dadada">fx</text><text x="6.8" y="11.8" font-size="4.6" font-family="Liberation Sans,sans-serif" fill="#d0d0d0" textLength="5" lengthAdjust="spacingAndGlyphs">co</text></svg>
<div style="left:1254.59px;top:179.34px;width:13.24px;height:13.99px;background:#686868;border:1px solid #3a3a3a;"></div>
<svg style="left:1256.26px;top:179.06px;width:13.39px;height:12.87px;" viewBox="0 0 8.8 9.2" preserveAspectRatio="none"><path d="M1.6 4.8 L3.8 7.8 L8 0.8" fill="none" stroke="#f0f0f0" stroke-width="1.4"/></svg>
<div class="t" id="t108" style="top:179.73px;font-size:11px;line-height:13.2px;color:#f2f2f2;left:1274.38px;transform:scaleX(0.883);transform-origin:0 50%;">Propagate Frame 1</div>
<div style="left:1142.42px;top:201.3px;width:223.58px;height:1px;background:#474747"></div>
<div style="left:1142.42px;top:202.14px;width:223.58px;height:1px;background:#5d5d5d"></div>
<div class="t" id="t109" style="top:209.11px;font-size:11px;line-height:13.2px;color:#a8a8a8;left:1148.81px;transform:scaleX(0.897);transform-origin:0 50%;">Lock:</div>
<svg style="left:1180.77px;top:209.28px;width:13.39px;height:12.59px;" viewBox="0 0 8.8 9" preserveAspectRatio="none"><rect x="0.5" y="0.5" width="7.8" height="8" fill="none" stroke="#8e8e8e" stroke-width="0.9"/><g fill="#8e8e8e"><rect x="1.8" y="1.8" width="2.2" height="2.2"/><rect x="4.8" y="4.8" width="2.2" height="2.2"/></g><g fill="#757575"><rect x="4.8" y="1.8" width="2.2" height="2.2"/><rect x="1.8" y="4.8" width="2.2" height="2.2"/></g></svg>
<svg style="left:1201.78px;top:207.88px;width:16.74px;height:14.55px;" viewBox="0 0 11 10.4" preserveAspectRatio="none"><path d="M10.2 0.4 L4.6 6.6 L3.8 6 Z" fill="#9a9a9a"/><path d="M4.4 6.4 Q3.8 9.4 0.4 9.8 Q2.4 8.4 2.6 6 Z" fill="#9a9a9a"/></svg>
<svg style="left:1224.91px;top:208.44px;width:15.52px;height:14.27px;" viewBox="0 0 10.2 10.2" preserveAspectRatio="none"><g stroke="#9a9a9a" stroke-width="1" fill="none"><path d="M5.1 0.8 V9.4 M0.8 5.1 H9.4"/></g><path d="M5.1 0 L6.7 2 H3.5 Z M5.1 10.2 L6.7 8.2 H3.5 Z M0 5.1 L2 3.5 V6.7 Z M10.2 5.1 L8.2 3.5 V6.7 Z" fill="#9a9a9a"/></svg>
<svg style="left:1248.04px;top:208.16px;width:12.78px;height:14.27px;" viewBox="0 0 8.4 10.2" preserveAspectRatio="none"><rect x="0.6" y="4.6" width="7.2" height="5" fill="#9c9c9c"/><path d="M2 4.6 V3 A2.2 2.2 0 0 1 6.4 3 V4.6" fill="none" stroke="#9c9c9c" stroke-width="1.2"/></svg>
<div class="t" id="t110" style="top:208.55px;font-size:11px;line-height:13.2px;color:#b0b0b0;left:1286.86px;transform:scaleX(0.845);transform-origin:0 50%;">Fill:</div>
<div style="left:1307.4px;top:206.2px;width:35.01px;height:18.47px;background:#4b4b4b;border:1px solid #444;"></div>
<div class="t" id="t111" style="top:209.41px;font-size:10.5px;line-height:12.6px;color:#737373;left:1313.49px;transform:scaleX(0.907);transform-origin:0 50%;">100%</div>
<div style="left:1342.41px;top:206.2px;width:18.57px;height:18.47px;background:#636363;border:1px solid #474747;border-radius:0 2px 2px 0;"></div>
<svg style="left:1348.5px;top:214.03px;width:6.09px;height:3.64px;" viewBox="0 0 4 2.6" preserveAspectRatio="none"><path d="M0 0 H4 L2 2.6 Z" fill="#a6a6a6"/></svg>
<div style="left:1142.42px;top:228.58px;width:223.58px;height:1px;background:#3c3c3c"></div>
<div style="left:1142.42px;top:229.14px;width:209.12px;height:22.38px;background:#555;"></div>
<div style="left:1142.42px;top:229.14px;width:29.53px;height:22.38px;background:#7d55b4;"></div>
<div style="left:1150.94px;top:233.62px;width:12.18px;height:12.87px;background:#7d55b4;border:1px solid #6b46a0;box-shadow:inset 0 0 0 0.5px #8e68c4;"></div>
<svg style="left:1177.73px;top:235.58px;width:7px;height:9.23px;" viewBox="0 0 4.6 6.6" preserveAspectRatio="none"><path d="M0.3 0 V6.6 L4.4 3.3 Z" fill="#f4f4f4"/></svg>
<svg style="left:1190.21px;top:234.18px;width:15.83px;height:12.03px;" viewBox="0 0 10.4 8.6" preserveAspectRatio="none"><path d="M0.3 0.3 H4 L5 1.6 H10 V8.4 H0.3 Z" fill="#bdbdbd"/><path d="M0.3 2.6 H10" stroke="#a2a2a2" stroke-width="0.7"/></svg>
<div class="t" id="t112" style="top:235.01px;font-size:10.5px;line-height:12.6px;color:#ececec;left:1217.6px;transform:scaleX(0.957);transform-origin:0 50%;">Group monotonia</div>
<div style="left:1351.54px;top:229.14px;width:14.46px;height:419.11px;background:#404040;border-left:1px solid #333;"></div>
<svg style="left:1355.8px;top:234.46px;width:6.09px;height:3.64px;" viewBox="0 0 4 2.6" preserveAspectRatio="none"><path d="M0 2.6 H4 L2 0 Z" fill="#f0f0f0"/></svg>
<div style="left:1353.98px;top:246.49px;width:9.74px;height:47.84px;background:linear-gradient(90deg,#8e8e8e,#7a7a7a);border-radius:3px;border:1px solid #4c4c4c;"></div>
<svg style="left:1355.8px;top:643.5px;width:6.09px;height:3.64px;" viewBox="0 0 4 2.6" preserveAspectRatio="none"><path d="M0 0 H4 L2 2.6 Z" fill="#f0f0f0"/></svg>
<div style="left:1142.42px;top:251.52px;width:209.12px;height:177.38px;background:#2e2e2e;"></div>
<div style="left:1142.42px;top:251.8px;width:209.12px;height:12.87px;background:#3a3a3a;"></div>
<svg style="left:1323.23px;top:256.28px;width:9.13px;height:6.16px;" viewBox="0 0 6 4.4" preserveAspectRatio="none"><path d="M2.6 0 L0.2 2.2 L2.6 4.4 Z M5.6 0 L3.2 2.2 L5.6 4.4 Z" fill="#dedede"/></svg>
<svg style="left:1340.28px;top:256px;width:8.52px;height:6.71px;" viewBox="0 0 5.6 4.8" preserveAspectRatio="none"><path d="M0.6 0.5 L5 4.3 M5 0.5 L0.6 4.3" stroke="#e6e6e6" stroke-width="1.1" fill="none"/></svg>
<div style="left:1142.42px;top:264.67px;width:209.12px;height:17.91px;background:#434343;"></div>
<div style="left:1142.42px;top:264.95px;width:61.49px;height:17.91px;background:#535353;border-right:1px solid #303030;"></div>
<div class="t" id="t113" style="top:268.15px;font-size:11px;line-height:13.2px;color:#f6f6f6;font-weight:700;left:1149.42px;transform:scaleX(0.881);transform-origin:0 50%;">Paragraph</div>
<div style="left:1203.91px;top:264.95px;width:59.66px;height:17.07px;background:#454545;border-right:1px solid #303030;"></div>
<div class="t" id="t114" style="top:268.15px;font-size:11px;line-height:13.2px;color:#b4b4b4;left:1211.52px;transform:scaleX(0.930);transform-origin:0 50%;">Character</div>
<svg style="left:1333.28px;top:270.27px;width:13.7px;height:7.41px;" viewBox="0 0 9 5.3" preserveAspectRatio="none"><path d="M0 1.6 H3 L1.5 3.6 Z" fill="#dcdcdc"/><path d="M4 0.6 H9 M4 2 H9 M4 3.4 H9 M4 4.8 H9" stroke="#b4b4b4" stroke-width="0.8"/></svg>
<div style="left:1142.42px;top:282.58px;width:209.12px;height:145.49px;background:#535353;"></div>
<svg style="left:1156.72px;top:293.21px;width:14.61px;height:15.39px;" viewBox="0 0 9.6 11" preserveAspectRatio="none"><rect x="0" y="0.2" width="9.6" height="0.95" fill="#a4a4a4"/><rect x="0" y="1.77" width="6.34" height="0.95" fill="#a4a4a4"/><rect x="0" y="3.34" width="9.6" height="0.95" fill="#a4a4a4"/><rect x="0" y="4.91" width="6.34" height="0.95" fill="#a4a4a4"/><rect x="0" y="6.49" width="9.6" height="0.95" fill="#a4a4a4"/><rect x="0" y="8.06" width="6.34" height="0.95" fill="#a4a4a4"/><rect x="0" y="9.63" width="9.6" height="0.95" fill="#a4a4a4"/></svg>
<svg style="left:1181.08px;top:293.21px;width:14.61px;height:15.39px;" viewBox="0 0 9.6 11" preserveAspectRatio="none"><rect x="0" y="0.2" width="9.6" height="0.95" fill="#a4a4a4"/><rect x="1.63" y="1.77" width="6.34" height="0.95" fill="#a4a4a4"/><rect x="0" y="3.34" width="9.6" height="0.95" fill="#a4a4a4"/><rect x="1.63" y="4.91" width="6.34" height="0.95" fill="#a4a4a4"/><rect x="0" y="6.49" width="9.6" height="0.95" fill="#a4a4a4"/><rect x="1.63" y="8.06" width="6.34" height="0.95" fill="#a4a4a4"/><rect x="0" y="9.63" width="9.6" height="0.95" fill="#a4a4a4"/></svg>
<svg style="left:1205.43px;top:293.21px;width:14.61px;height:15.39px;" viewBox="0 0 9.6 11" preserveAspectRatio="none"><rect x="0" y="0.2" width="9.6" height="0.95" fill="#a4a4a4"/><rect x="3.26" y="1.77" width="6.34" height="0.95" fill="#a4a4a4"/><rect x="0" y="3.34" width="9.6" height="0.95" fill="#a4a4a4"/><rect x="3.26" y="4.91" width="6.34" height="0.95" fill="#a4a4a4"/><rect x="0" y="6.49" width="9.6" height="0.95" fill="#a4a4a4"/><rect x="3.26" y="8.06" width="6.34" height="0.95" fill="#a4a4a4"/><rect x="0" y="9.63" width="9.6" height="0.95" fill="#a4a4a4"/></svg>
<div style="left:1234.65px;top:289.85px;width:22.22px;height:22.1px;background:#383838;border:1px solid #2c2c2c;border-radius:2px;"></div>
<svg style="left:1238.61px;top:293.21px;width:14.61px;height:15.39px;" viewBox="0 0 9.6 11" preserveAspectRatio="none"><rect x="0" y="0.2" width="9.6" height="0.95" fill="#a4a4a4"/><rect x="0" y="1.77" width="9.6" height="0.95" fill="#a4a4a4"/><rect x="0" y="3.34" width="9.6" height="0.95" fill="#a4a4a4"/><rect x="0" y="4.91" width="9.6" height="0.95" fill="#a4a4a4"/><rect x="0" y="6.49" width="9.6" height="0.95" fill="#a4a4a4"/><rect x="0" y="8.06" width="9.6" height="0.95" fill="#a4a4a4"/><rect x="0" y="9.63" width="5.28" height="0.95" fill="#a4a4a4"/></svg>
<svg style="left:1263.26px;top:293.21px;width:14.61px;height:15.39px;" viewBox="0 0 9.6 11" preserveAspectRatio="none"><rect x="0" y="0.2" width="9.6" height="0.95" fill="#a4a4a4"/><rect x="0" y="1.77" width="9.6" height="0.95" fill="#a4a4a4"/><rect x="0" y="3.34" width="9.6" height="0.95" fill="#a4a4a4"/><rect x="0" y="4.91" width="9.6" height="0.95" fill="#a4a4a4"/><rect x="0" y="6.49" width="9.6" height="0.95" fill="#a4a4a4"/><rect x="0" y="8.06" width="9.6" height="0.95" fill="#a4a4a4"/><rect x="2.16" y="9.63" width="5.28" height="0.95" fill="#a4a4a4"/></svg>
<svg style="left:1287.62px;top:293.21px;width:14.61px;height:15.39px;" viewBox="0 0 9.6 11" preserveAspectRatio="none"><rect x="0" y="0.2" width="9.6" height="0.95" fill="#a4a4a4"/><rect x="0" y="1.77" width="9.6" height="0.95" fill="#a4a4a4"/><rect x="0" y="3.34" width="9.6" height="0.95" fill="#a4a4a4"/><rect x="0" y="4.91" width="9.6" height="0.95" fill="#a4a4a4"/><rect x="0" y="6.49" width="9.6" height="0.95" fill="#a4a4a4"/><rect x="0" y="8.06" width="9.6" height="0.95" fill="#a4a4a4"/><rect x="4.32" y="9.63" width="5.28" height="0.95" fill="#a4a4a4"/></svg>
<svg style="left:1322.01px;top:293.21px;width:14.61px;height:15.39px;" viewBox="0 0 9.6 11" preserveAspectRatio="none"><rect x="0" y="0.2" width="9.6" height="0.95" fill="#a4a4a4"/><rect x="0" y="1.77" width="9.6" height="0.95" fill="#a4a4a4"/><rect x="0" y="3.34" width="9.6" height="0.95" fill="#a4a4a4"/><rect x="0" y="4.91" width="9.6" height="0.95" fill="#a4a4a4"/><rect x="0" y="6.49" width="9.6" height="0.95" fill="#a4a4a4"/><rect x="0" y="8.06" width="9.6" height="0.95" fill="#a4a4a4"/><rect x="0" y="9.63" width="9.6" height="0.95" fill="#a4a4a4"/></svg>
<div style="left:1142.42px;top:317.97px;width:209.12px;height:1px;background:#464646"></div>
<div style="left:1142.42px;top:318.81px;width:209.12px;height:1px;background:#5e5e5e"></div>
<div style="left:1173.16px;top:325.11px;width:53.57px;height:16.23px;background:#3b3b3b;border:1px solid #323232;"></div>
<div class="t" id="t115" style="top:326.9px;font-size:11px;line-height:13.2px;color:#f0f0f0;left:1177.42px;transform:scaleX(0.995);transform-origin:0 50%;">0 pt</div>
<div style="left:1275.44px;top:325.11px;width:54.79px;height:16.23px;background:#3b3b3b;border:1px solid #323232;"></div>
<div class="t" id="t116" style="top:326.9px;font-size:11px;line-height:13.2px;color:#f0f0f0;left:1279.7px;transform:scaleX(0.995);transform-origin:0 50%;">0 pt</div>
<div style="left:1173.16px;top:347.77px;width:53.57px;height:16.51px;background:#3b3b3b;border:1px solid #323232;"></div>
<div class="t" id="t117" style="top:349.7px;font-size:11px;line-height:13.2px;color:#f0f0f0;left:1177.42px;transform:scaleX(0.995);transform-origin:0 50%;">0 pt</div>
<div style="left:1142.42px;top:369.03px;width:209.12px;height:1px;background:#464646"></div>
<div style="left:1142.42px;top:369.87px;width:209.12px;height:1px;background:#5e5e5e"></div>
<div style="left:1173.16px;top:375.47px;width:53.57px;height:17.35px;background:#3b3b3b;border:1px solid #323232;"></div>
<div class="t" id="t118" style="top:377.82px;font-size:11px;line-height:13.2px;color:#f0f0f0;left:1177.42px;transform:scaleX(0.995);transform-origin:0 50%;">0 pt</div>
<div style="left:1275.44px;top:375.47px;width:54.79px;height:17.35px;background:#3b3b3b;border:1px solid #323232;"></div>
<div class="t" id="t119" style="top:377.82px;font-size:11px;line-height:13.2px;color:#f0f0f0;left:1279.7px;transform:scaleX(0.995);transform-origin:0 50%;">0 pt</div>
<div style="left:1142.42px;top:397.71px;width:209.12px;height:1px;background:#464646"></div>
<div style="left:1142.42px;top:398.55px;width:209.12px;height:1px;background:#5e5e5e"></div>
<svg style="left:1149.88px;top:325.95px;width:17.5px;height:14.83px;" viewBox="0 0 11.5 10.6" preserveAspectRatio="none"><path d="M0 4.4 H3.6 M2.4 3 L4 4.4 L2.4 5.8" stroke="#e4e4e4" stroke-width="0.9" fill="none"/><path d="M5.2 0 V10.4" stroke="#dcdcdc" stroke-width="0.9"/><path d="M6.6 1.4 H10.4 M6.6 3.4 H10.4 M6.6 5.4 H10.4 M6.6 7.4 H10.4 M6.6 9.2 H10.4" stroke="#a8a8a8" stroke-width="0.8"/></svg>
<svg style="left:1251.85px;top:325.95px;width:18.26px;height:14.83px;" viewBox="0 0 12 10.6" preserveAspectRatio="none"><path d="M11.6 4.4 H8 M9.2 3 L7.6 4.4 L9.2 5.8" stroke="#e4e4e4" stroke-width="0.9" fill="none"/><path d="M6.2 0 V10.4" stroke="#dcdcdc" stroke-width="0.9"/><path d="M0.8 1.4 H4.8 M0.8 3.4 H4.8 M0.8 5.4 H4.8 M0.8 7.4 H4.8 M0.8 9.2 H4.8" stroke="#a8a8a8" stroke-width="0.8"/></svg>
<svg style="left:1149.88px;top:348.33px;width:17.5px;height:15.39px;" viewBox="0 0 11.5 11" preserveAspectRatio="none"><path d="M0 2 H3.2 M2.2 0.8 L3.6 2 L2.2 3.2" stroke="#e4e4e4" stroke-width="0.9" fill="none"/><path d="M6 2 H10.4" stroke="#d4d4d4" stroke-width="0.9"/><path d="M4.4 4 H10.4 M4.4 6 H10.4 M4.4 8 H10.4 M4.4 10 H10.4" stroke="#a8a8a8" stroke-width="0.8"/></svg>
<svg style="left:1149.88px;top:376.31px;width:17.5px;height:15.95px;" viewBox="0 0 11.5 11.4" preserveAspectRatio="none"><path d="M0 2 H3 M2 0.8 L3.4 2 L2 3.2" stroke="#e4e4e4" stroke-width="0.9" fill="none"/><rect x="4.4" y="0.6" width="6" height="2.8" fill="#ececec"/><path d="M4.4 5.2 H10.4 M4.4 7 H10.4 M4.4 8.8 H10.4 M4.4 10.6 H10.4" stroke="#a8a8a8" stroke-width="0.8"/></svg>
<svg style="left:1251.85px;top:376.31px;width:18.26px;height:16.51px;" viewBox="0 0 12 11.8" preserveAspectRatio="none"><path d="M3.6 9.8 H0.4 M1.6 8.6 L0.2 9.8 L1.6 11" stroke="#e4e4e4" stroke-width="0.9" fill="none"/><rect x="5" y="8.2" width="6.2" height="2.8" fill="#ececec"/><path d="M5 0.8 H11.2 M5 2.6 H11.2 M5 4.4 H11.2 M5 6.2 H11.2" stroke="#a8a8a8" stroke-width="0.8"/></svg>
<div style="left:1155.2px;top:407.08px;width:13.09px;height:12.59px;background:#686868;border:1px solid #3a3a3a;"></div>
<svg style="left:1156.72px;top:406.8px;width:13.39px;height:12.87px;" viewBox="0 0 8.8 9.2" preserveAspectRatio="none"><path d="M1.6 4.8 L3.8 7.8 L8 0.8" fill="none" stroke="#f0f0f0" stroke-width="1.4"/></svg>
<div class="t" id="t120" style="top:406.64px;font-size:11px;line-height:13.2px;color:#f0f0f0;left:1173.47px;transform:scaleX(0.901);transform-origin:0 50%;">Hyphenate</div>
<div style="left:1142.42px;top:428.9px;width:209.12px;height:219.35px;background:#535353;"></div>
<div style="left:1142.42px;top:428.63px;width:209.12px;height:1.2px;background:#2c2c2c"></div>
<div style="left:1171.94px;top:428.9px;width:1px;height:219.35px;background:#434343"></div>
<div style="left:1192.64px;top:428.9px;width:19.79px;height:4.76px;background:#fafafa;border:1.3px solid #1e1e1e;border-top:none;border-radius:0 0 2px 2px;"></div>
<div style="left:1340.28px;top:429.18px;width:10.05px;height:10.91px;background:linear-gradient(#c4c4c4,#8a8a8a 60%,#666);"></div>
<svg style="left:1209.39px;top:442.05px;width:12.18px;height:7.27px;" viewBox="0 0 8 5.2" preserveAspectRatio="none"><path d="M0.3 2.6 Q4 -1.4 7.7 2.6 Q4 6.6 0.3 2.6 Z" fill="none" stroke="#8a8a8a" stroke-width="0.9"/><circle cx="4.2" cy="2.6" r="1.3" fill="#8a8a8a"/></svg>
<div class="t" id="t121" style="top:439.39px;font-size:10.5px;line-height:12.6px;color:#ececec;left:1228.26px;transform:scaleX(0.930);transform-origin:0 50%;">Effects</div>
<svg style="left:1227.04px;top:461.36px;width:12.18px;height:7.27px;" viewBox="0 0 8 5.2" preserveAspectRatio="none"><path d="M0.3 2.6 Q4 -1.4 7.7 2.6 Q4 6.6 0.3 2.6 Z" fill="none" stroke="#8a8a8a" stroke-width="0.9"/><circle cx="4.2" cy="2.6" r="1.3" fill="#8a8a8a"/></svg>
<div class="t" id="t122" style="top:458.7px;font-size:10.5px;line-height:12.6px;color:#ececec;left:1245.61px;transform:scaleX(0.945);transform-origin:0 50%;">Drop Shadow</div>
<div style="left:1142.42px;top:475.07px;width:209.12px;height:1px;background:#3f3f3f"></div>
<div style="left:1150.64px;top:488.22px;width:12.78px;height:12.03px;background:#575757;border:1px solid #444;"></div>
<svg style="left:1192.64px;top:478.43px;width:19.79px;height:32.45px;" viewBox="0 0 13 23.2" preserveAspectRatio="none"><rect x="0.5" y="0.5" width="12" height="22.2" rx="1" fill="#fbfbfb" stroke="#1e1e1e" stroke-width="1.1"/><rect x="0.9" y="0.9" width="3.6" height="3.55" fill="#d6d6d6"/><rect x="8.1" y="0.9" width="3.6" height="3.55" fill="#d6d6d6"/><rect x="4.5" y="4.45" width="3.6" height="3.55" fill="#d6d6d6"/><rect x="0.9" y="8" width="3.6" height="3.55" fill="#d6d6d6"/><rect x="8.1" y="8" width="3.6" height="3.55" fill="#d6d6d6"/><rect x="4.5" y="11.55" width="3.6" height="3.55" fill="#d6d6d6"/><rect x="0.9" y="15.1" width="3.6" height="3.55" fill="#d6d6d6"/><rect x="8.1" y="15.1" width="3.6" height="3.55" fill="#d6d6d6"/><rect x="4.5" y="18.65" width="3.6" height="3.55" fill="#d6d6d6"/></svg>
<div class="t" id="t123" style="top:490.03px;font-size:10.5px;line-height:12.6px;color:#ececec;left:1222.78px;transform:scaleX(0.891);transform-origin:0 50%;">Layer 1</div>
<div class="t" id="t124" style="top:488.27px;font-size:12.5px;line-height:15px;color:#c8c8c8;font-family:'Liberation Serif',serif;font-style:italic;left:1324.45px;transform:scaleX(1.247);transform-origin:0 50%;">fx</div>
<div style="left:1340.28px;top:475.91px;width:10.05px;height:38.89px;background:linear-gradient(#c4c4c4,#8a8a8a 60%,#666);"></div>
<svg style="left:1342.26px;top:493.95px;width:6.09px;height:3.64px;" viewBox="0 0 4 2.6" preserveAspectRatio="none"><path d="M0 2.6 H4 L2 0 Z" fill="#1c1c1c"/></svg>
<svg style="left:1209.39px;top:518.99px;width:12.18px;height:7.27px;" viewBox="0 0 8 5.2" preserveAspectRatio="none"><path d="M0.3 2.6 Q4 -1.4 7.7 2.6 Q4 6.6 0.3 2.6 Z" fill="none" stroke="#8a8a8a" stroke-width="0.9"/><circle cx="4.2" cy="2.6" r="1.3" fill="#8a8a8a"/></svg>
<div class="t" id="t125" style="top:516.33px;font-size:10.5px;line-height:12.6px;color:#ececec;left:1228.26px;transform:scaleX(0.930);transform-origin:0 50%;">Effects</div>
<svg style="left:1227.04px;top:538.3px;width:12.18px;height:7.27px;" viewBox="0 0 8 5.2" preserveAspectRatio="none"><path d="M0.3 2.6 Q4 -1.4 7.7 2.6 Q4 6.6 0.3 2.6 Z" fill="none" stroke="#8a8a8a" stroke-width="0.9"/><circle cx="4.2" cy="2.6" r="1.3" fill="#8a8a8a"/></svg>
<div class="t" id="t126" style="top:535.64px;font-size:10.5px;line-height:12.6px;color:#ececec;left:1245.61px;transform:scaleX(0.945);transform-origin:0 50%;">Drop Shadow</div>
<div style="left:1142.42px;top:551.45px;width:209.12px;height:1px;background:#3f3f3f"></div>
<div style="left:1150.64px;top:564.6px;width:12.78px;height:12.03px;background:#575757;border:1px solid #444;"></div>
<svg style="left:1192.64px;top:554.81px;width:19.79px;height:32.45px;" viewBox="0 0 13 23.2" preserveAspectRatio="none"><rect x="0.5" y="0.5" width="12" height="22.2" rx="1" fill="#fbfbfb" stroke="#1e1e1e" stroke-width="1.1"/><rect x="0.9" y="0.9" width="3.6" height="3.55" fill="#d6d6d6"/><rect x="8.1" y="0.9" width="3.6" height="3.55" fill="#d6d6d6"/><rect x="4.5" y="4.45" width="3.6" height="3.55" fill="#d6d6d6"/><rect x="0.9" y="8" width="3.6" height="3.55" fill="#d6d6d6"/><rect x="8.1" y="8" width="3.6" height="3.55" fill="#d6d6d6"/><rect x="4.5" y="11.55" width="3.6" height="3.55" fill="#d6d6d6"/><rect x="0.9" y="15.1" width="3.6" height="3.55" fill="#d6d6d6"/><rect x="8.1" y="15.1" width="3.6" height="3.55" fill="#d6d6d6"/><rect x="4.5" y="18.65" width="3.6" height="3.55" fill="#d6d6d6"/></svg>
<div class="t" id="t127" style="top:566.41px;font-size:10.5px;line-height:12.6px;color:#ececec;left:1222.78px;transform:scaleX(0.891);transform-origin:0 50%;">Layer 1</div>
<div class="t" id="t128" style="top:564.65px;font-size:12.5px;line-height:15px;color:#c8c8c8;font-family:'Liberation Serif',serif;font-style:italic;left:1324.45px;transform:scaleX(1.247);transform-origin:0 50%;">fx</div>
<div style="left:1340.28px;top:552.29px;width:10.05px;height:38.89px;background:linear-gradient(#c4c4c4,#8a8a8a 60%,#666);"></div>
<svg style="left:1342.26px;top:570.33px;width:6.09px;height:3.64px;" viewBox="0 0 4 2.6" preserveAspectRatio="none"><path d="M0 2.6 H4 L2 0 Z" fill="#1c1c1c"/></svg>
<svg style="left:1209.39px;top:595.93px;width:12.18px;height:7.27px;" viewBox="0 0 8 5.2" preserveAspectRatio="none"><path d="M0.3 2.6 Q4 -1.4 7.7 2.6 Q4 6.6 0.3 2.6 Z" fill="none" stroke="#8a8a8a" stroke-width="0.9"/><circle cx="4.2" cy="2.6" r="1.3" fill="#8a8a8a"/></svg>
<div class="t" id="t129" style="top:593.27px;font-size:10.5px;line-height:12.6px;color:#ececec;left:1228.26px;transform:scaleX(0.930);transform-origin:0 50%;">Effects</div>
<svg style="left:1227.04px;top:615.24px;width:12.18px;height:7.27px;" viewBox="0 0 8 5.2" preserveAspectRatio="none"><path d="M0.3 2.6 Q4 -1.4 7.7 2.6 Q4 6.6 0.3 2.6 Z" fill="none" stroke="#8a8a8a" stroke-width="0.9"/><circle cx="4.2" cy="2.6" r="1.3" fill="#8a8a8a"/></svg>
<div class="t" id="t130" style="top:612.58px;font-size:10.5px;line-height:12.6px;color:#ececec;left:1245.61px;transform:scaleX(0.945);transform-origin:0 50%;">Drop Shadow</div>
<div style="left:1142.42px;top:628.39px;width:209.12px;height:1px;background:#3f3f3f"></div>
<svg style="left:1192.64px;top:631.75px;width:19.79px;height:16.51px;" viewBox="0 0 13 11.8" preserveAspectRatio="none"><rect x="0.5" y="0.5" width="12" height="14" rx="1" fill="#fbfbfb" stroke="#1e1e1e" stroke-width="1.1"/><rect x="0.9" y="0.9" width="3.6" height="3.55" fill="#d6d6d6"/><rect x="8.1" y="0.9" width="3.6" height="3.55" fill="#d6d6d6"/><rect x="4.5" y="4.45" width="3.6" height="3.55" fill="#d6d6d6"/><rect x="0.9" y="8" width="3.6" height="3.55" fill="#d6d6d6"/><rect x="8.1" y="8" width="3.6" height="3.55" fill="#d6d6d6"/></svg>
<div style="left:1150.64px;top:641.54px;width:12.78px;height:6.71px;background:#575757;border:1px solid #444;border-bottom:none;"></div>
<div style="left:1223.08px;top:645.74px;width:1.52px;height:2.52px;background:#ddd;"></div>
<div style="left:1251.09px;top:645.46px;width:1.83px;height:2.8px;background:#ddd;"></div>
<div class="t" id="t131" style="top:639.63px;font-size:12.5px;line-height:15px;color:#c8c8c8;font-family:'Liberation Serif',serif;font-style:italic;left:1325.06px;clip-path:inset(0 0 46% 0);">f</div>
<div style="left:1340.28px;top:629.23px;width:10.05px;height:19.03px;background:linear-gradient(#c4c4c4,#8a8a8a 60%,#666);"></div>
<div style="left:1142.42px;top:648.25px;width:223.58px;height:20.14px;background:#535353;"></div>
<div style="left:1142.42px;top:648.25px;width:223.58px;height:1.2px;background:#2e2e2e"></div>
<svg style="left:1161.29px;top:654.69px;width:15.83px;height:9.23px;" viewBox="0 0 10.4 6.6" preserveAspectRatio="none"><g fill="none" stroke="#828282" stroke-width="1.1"><rect x="0.6" y="1.4" width="5" height="3.8" rx="1.9"/><rect x="4.8" y="1.4" width="5" height="3.8" rx="1.9"/></g></svg>
<div class="t" id="t132" style="top:651.37px;font-size:13px;line-height:15.6px;color:#c4c4c4;font-family:'Liberation Serif',serif;font-style:italic;left:1189.6px;transform:scaleX(1.297);transform-origin:0 50%;">fx</div>
<div style="left:1204.52px;top:663.36px;width:2.13px;height:2.24px;background:#f0f0f0;"></div>
<svg style="left:1216.08px;top:653.01px;width:14.61px;height:12.59px;" viewBox="0 0 9.6 9" preserveAspectRatio="none"><rect x="0.3" y="0.3" width="9" height="8.4" fill="#c2c2c2"/><circle cx="4.8" cy="4.5" r="2.5" fill="#4c4c4c"/></svg>
<svg style="left:1245px;top:653.01px;width:13.09px;height:12.31px;" viewBox="0 0 8.6 8.8" preserveAspectRatio="none"><circle cx="4.2" cy="4.3" r="3.7" fill="none" stroke="#c4c4c4" stroke-width="1"/><path d="M1.6 6.9 A3.7 3.7 0 0 1 6.8 1.7 Z" fill="#c4c4c4"/></svg>
<div style="left:1259px;top:663.36px;width:2.13px;height:2.24px;background:#f0f0f0;"></div>
<svg style="left:1270.27px;top:652.73px;width:15.52px;height:12.31px;" viewBox="0 0 10.2 8.8" preserveAspectRatio="none"><path d="M0.3 0.3 H4 L5 1.6 H9.8 V8.6 H0.3 Z" fill="#b4b4b4"/></svg>
<svg style="left:1297.97px;top:653.01px;width:13.39px;height:12.59px;" viewBox="0 0 8.8 9" preserveAspectRatio="none"><path d="M0.5 0.5 H8.3 V8.5 H3.6 L0.5 5.6 Z" fill="#b6b6b6"/><path d="M0.5 5.6 H3.6 V8.5 Z" fill="#5c5c5c"/></svg>
<svg style="left:1325.06px;top:652.17px;width:12.78px;height:13.71px;" viewBox="0 0 8.4 9.8" preserveAspectRatio="none"><path d="M0.4 2.2 H8 M2.8 2.2 V0.8 H5.6 V2.2" stroke="#8a8a8a" stroke-width="1" fill="none"/><path d="M1.2 3.2 H7.2 L6.6 9.6 H1.8 Z" fill="#8a8a8a"/></svg>
<div style="left:1142.42px;top:668.4px;width:223.58px;height:7.83px;background:#4e4e4e;"></div>
<div style="left:1142.42px;top:668.4px;width:223.58px;height:1px;background:#3a3a3a"></div>
<div style="left:1243.48px;top:670.92px;width:21.31px;height:1.68px;background:#383838;"></div>
<div style="left:1259.61px;top:68.27px;width:38.66px;height:17.63px;background:#393939;border-radius:3px 3px 0 0;border:1px solid #2c2c2c;border-bottom:none;"></div>
<div style="left:1260.53px;top:81.7px;width:36.83px;height:4.2px;background:#5c5c5c;"></div>
<svg style="left:1269.35px;top:72.74px;width:7.61px;height:5.88px;" viewBox="0 0 5 4.2" preserveAspectRatio="none"><path d="M0 0 L2.2 2.1 L0 4.2 Z M2.6 0 L4.8 2.1 L2.6 4.2 Z" fill="#e0e0e0"/></svg>
<svg style="left:1285.18px;top:72.18px;width:7.91px;height:6.71px;" viewBox="0 0 5.2 4.8" preserveAspectRatio="none"><path d="M0.6 0.5 L4.6 4.3 M4.6 0.5 L0.6 4.3" stroke="#e6e6e6" stroke-width="1.1" fill="none"/></svg>
<svg style="left:8.07px;top:92.05px;width:21.92px;height:20.14px;opacity:.9;" viewBox="0 0 14.4 14.4" preserveAspectRatio="none"><path d="M1.6 1 V10.4 L7.8 5.8 Z" fill="#d6d6d6"/><path d="M11.4 6 V12.6 M8.2 9.3 H14.6" stroke="#c8c8c8" stroke-width="1"/><path d="M11.4 5.2 L12.4 6.6 H10.4 Z M11.4 13.4 L12.4 12 H10.4 Z M7.4 9.3 L8.8 8.3 V10.3 Z M15.4 9.3 L14 8.3 V10.3 Z" fill="#c8c8c8"/></svg>
<svg style="left:8.07px;top:118.63px;width:21.92px;height:20.14px;opacity:.9;" viewBox="0 0 14.4 14.4" preserveAspectRatio="none"><ellipse cx="7.4" cy="7.4" rx="5.6" ry="5.8" fill="none" stroke="#cfcfcf" stroke-width="1.1" stroke-dasharray="2.2 1.3"/></svg>
<svg style="left:27.7px;top:136.25px;width:4.57px;height:4.2px;" viewBox="0 0 3 3" preserveAspectRatio="none"><path d="M3 0 V3 H0 Z" fill="#f2f2f2"/></svg>
<svg style="left:8.07px;top:145.21px;width:21.92px;height:20.14px;opacity:.9;" viewBox="0 0 14.4 14.4" preserveAspectRatio="none"><path d="M2 2.6 L6.4 5.4 L11.6 1.6 L10.4 9.6 L5.6 12.4 Z" fill="none" stroke="#d2d2d2" stroke-width="1.3"/><path d="M5.6 12.4 L4.8 14.6" stroke="#d2d2d2" stroke-width="1"/></svg>
<svg style="left:27.7px;top:162.83px;width:4.57px;height:4.2px;" viewBox="0 0 3 3" preserveAspectRatio="none"><path d="M3 0 V3 H0 Z" fill="#f2f2f2"/></svg>
<svg style="left:8.07px;top:170.39px;width:21.92px;height:20.14px;opacity:.9;" viewBox="0 0 14.4 14.4" preserveAspectRatio="none"><path d="M6 6 L13.4 13.6" stroke="#d4d4d4" stroke-width="1.8"/><path d="M4.6 0.8 L5.4 3.4 L8 2.4 L6.6 4.8 L9 6 L6.4 6.6 L6.6 9.4 L4.8 7.2 L2.6 9 L3.2 6.2 L0.6 5.4 L3.2 4.4 L2.2 1.8 L4.2 3.4 Z" fill="#d4d4d4"/></svg>
<svg style="left:27.7px;top:188.01px;width:4.57px;height:4.2px;" viewBox="0 0 3 3" preserveAspectRatio="none"><path d="M3 0 V3 H0 Z" fill="#f2f2f2"/></svg>
<svg style="left:8.07px;top:195.57px;width:21.92px;height:20.14px;opacity:.9;" viewBox="0 0 14.4 14.4" preserveAspectRatio="none"><path d="M4.4 0.8 V11 H14.4 M1 4 H11 V14.2" fill="none" stroke="#d2d2d2" stroke-width="1.6"/></svg>
<svg style="left:27.7px;top:213.19px;width:4.57px;height:4.2px;" viewBox="0 0 3 3" preserveAspectRatio="none"><path d="M3 0 V3 H0 Z" fill="#f2f2f2"/></svg>
<svg style="left:8.07px;top:222.15px;width:21.92px;height:20.14px;opacity:.9;" viewBox="0 0 14.4 14.4" preserveAspectRatio="none"><path d="M12.4 0.6 Q15.4 1.2 14.2 4 L11.6 6.6 L12.2 7.4 L11 8.4 L7.6 4.8 L8.8 3.8 L9.6 4.4 Z" fill="#dedede"/><path d="M8.6 6 L10.2 7.6 L4.6 13 L2 14.4 L3.2 11.6 Z" fill="#c8c8c8" stroke="#3a3a3a" stroke-width="0.5"/></svg>
<svg style="left:27.7px;top:239.77px;width:4.57px;height:4.2px;" viewBox="0 0 3 3" preserveAspectRatio="none"><path d="M3 0 V3 H0 Z" fill="#f2f2f2"/></svg>
<div style="left:4.57px;top:246.49px;width:30.44px;height:1px;background:#454545"></div>
<svg style="left:8.07px;top:251.52px;width:21.92px;height:20.14px;opacity:.9;" viewBox="0 0 14.4 14.4" preserveAspectRatio="none"><rect x="3.4" y="3.6" width="8.6" height="8.6" rx="1.2" fill="#b8b8b8"/><rect x="5.2" y="5.4" width="5" height="5" fill="#8c8c8c"/><path d="M4.6 1.6 V3.6 M6.6 1.6 V3.6 M8.8 1.6 V3.6 M10.8 1.6 V3.6 M4.6 12.2 V14.2 M6.6 12.2 V14.2 M8.8 12.2 V14.2 M10.8 12.2 V14.2 M1.4 5 H3.4 M1.4 7 H3.4 M1.4 9 H3.4 M1.4 11 H3.4 M12 5 H14 M12 7 H14 M12 9 H14 M12 11 H14" stroke="#c4c4c4" stroke-width="0.9"/></svg>
<svg style="left:27.7px;top:269.15px;width:4.57px;height:4.2px;" viewBox="0 0 3 3" preserveAspectRatio="none"><path d="M3 0 V3 H0 Z" fill="#f2f2f2"/></svg>
<svg style="left:8.07px;top:278.1px;width:21.92px;height:20.14px;opacity:.9;" viewBox="0 0 14.4 14.4" preserveAspectRatio="none"><path d="M14 0.8 L7.8 10 L5.8 8.4 Z" fill="#dadada"/><path d="M7.2 10.4 Q6.4 14 1 14.2 Q3.6 12.2 3.8 9.2 Q5.4 7.8 7.2 10.4 Z" fill="#dadada"/></svg>
<svg style="left:27.7px;top:295.73px;width:4.57px;height:4.2px;" viewBox="0 0 3 3" preserveAspectRatio="none"><path d="M3 0 V3 H0 Z" fill="#f2f2f2"/></svg>
<svg style="left:8.07px;top:304.68px;width:21.92px;height:20.14px;opacity:.9;" viewBox="0 0 14.4 14.4" preserveAspectRatio="none"><circle cx="7.8" cy="3.6" r="2.4" fill="#cfcfcf"/><path d="M6.6 5 H9 L9.6 9 H6 Z" fill="#cfcfcf"/><rect x="2.6" y="9" width="10.4" height="2.6" fill="#cfcfcf"/><rect x="2.6" y="12.6" width="10.4" height="1.4" fill="#b0b0b0"/></svg>
<svg style="left:27.7px;top:322.31px;width:4.57px;height:4.2px;" viewBox="0 0 3 3" preserveAspectRatio="none"><path d="M3 0 V3 H0 Z" fill="#f2f2f2"/></svg>
<svg style="left:8.07px;top:329.16px;width:21.92px;height:20.14px;opacity:.9;" viewBox="0 0 14.4 14.4" preserveAspectRatio="none"><path d="M13.8 2 L7.6 9.6 L6.4 8.6 Z" fill="#d8d8d8"/><path d="M7 9.6 Q6.4 13 2.2 13.4 Q4.4 11.8 4.6 8.8 Z" fill="#d8d8d8"/><path d="M2 4.4 Q5 0.6 9 2.6" fill="none" stroke="#d0d0d0" stroke-width="1.1"/><path d="M1 2.4 L1.8 5.6 L4.6 4.4 Z" fill="#d0d0d0"/></svg>
<svg style="left:27.7px;top:346.79px;width:4.57px;height:4.2px;" viewBox="0 0 3 3" preserveAspectRatio="none"><path d="M3 0 V3 H0 Z" fill="#f2f2f2"/></svg>
<svg style="left:8.07px;top:355.04px;width:21.92px;height:20.14px;opacity:.9;" viewBox="0 0 14.4 14.4" preserveAspectRatio="none"><path d="M6.4 3 L13.6 3 L9.6 10.4 L2.2 10.4 Z" fill="#dcdcdc"/><path d="M2.2 10.4 H9.6 V13.4 H2.2 Z" fill="#a8a8a8"/><path d="M9.6 10.4 L13.6 3 V6 L9.6 13.4 Z" fill="#c0c0c0"/></svg>
<svg style="left:27.7px;top:372.67px;width:4.57px;height:4.2px;" viewBox="0 0 3 3" preserveAspectRatio="none"><path d="M3 0 V3 H0 Z" fill="#f2f2f2"/></svg>
<svg style="left:8.07px;top:382.32px;width:21.92px;height:20.14px;opacity:.9;" viewBox="0 0 14.4 14.4" preserveAspectRatio="none"><path d="M3 7 L8.4 2.6 L12 8.4 L6.4 12.8 Q3.4 13.2 2.4 10.4 Z" fill="#c4c4c4"/><path d="M5.4 5.2 Q4 0.6 7.6 1.4" fill="none" stroke="#d8d8d8" stroke-width="1"/><path d="M11.4 6.4 Q14.4 7.6 13.2 12 Q12 9 10.8 8.4 Z" fill="#e4e4e4"/></svg>
<svg style="left:27.7px;top:399.95px;width:4.57px;height:4.2px;" viewBox="0 0 3 3" preserveAspectRatio="none"><path d="M3 0 V3 H0 Z" fill="#f2f2f2"/></svg>
<svg style="left:8.07px;top:408.2px;width:21.92px;height:20.14px;opacity:.9;" viewBox="0 0 14.4 14.4" preserveAspectRatio="none"><path d="M7.6 1.6 Q12.2 8.4 11.4 10.6 Q10.6 13.6 7.6 13.6 Q4.6 13.6 3.8 10.6 Q3 8.4 7.6 1.6 Z" fill="#bdbdbd"/></svg>
<svg style="left:27.7px;top:425.83px;width:4.57px;height:4.2px;" viewBox="0 0 3 3" preserveAspectRatio="none"><path d="M3 0 V3 H0 Z" fill="#f2f2f2"/></svg>
<svg style="left:8.07px;top:434.78px;width:21.92px;height:20.14px;opacity:.9;" viewBox="0 0 14.4 14.4" preserveAspectRatio="none"><circle cx="6" cy="5.6" r="3.8" fill="#bdbdbd"/><circle cx="5" cy="4.6" r="1.2" fill="#dcdcdc"/><path d="M8.4 8 L13.2 13.2" stroke="#d0d0d0" stroke-width="1.8"/></svg>
<svg style="left:27.7px;top:452.41px;width:4.57px;height:4.2px;" viewBox="0 0 3 3" preserveAspectRatio="none"><path d="M3 0 V3 H0 Z" fill="#f2f2f2"/></svg>
<div style="left:4.57px;top:457.72px;width:30.44px;height:1px;background:#454545"></div>
<svg style="left:8.07px;top:461.64px;width:21.92px;height:20.14px;opacity:.9;" viewBox="0 0 14.4 14.4" preserveAspectRatio="none"><path d="M9.6 1.4 L13.4 5 L11.6 6.2 L9.4 11 L3 14 L5.4 7.4 L8.6 3.4 Z" fill="#d0d0d0"/><path d="M3.4 13.6 L7.6 8.6" stroke="#555" stroke-width="0.9"/><circle cx="8" cy="8.2" r="0.9" fill="#555"/><path d="M8 3.8 L11.8 7" stroke="#555" stroke-width="0.8"/></svg>
<svg style="left:27.7px;top:479.27px;width:4.57px;height:4.2px;" viewBox="0 0 3 3" preserveAspectRatio="none"><path d="M3 0 V3 H0 Z" fill="#f2f2f2"/></svg>
<div style="left:4.26px;top:487.66px;width:30.44px;height:22.94px;background:#363636;border:1px solid #2a2a2a;border-radius:2px;"></div>
<div class="t" id="t133" style="top:487.17px;font-size:19px;line-height:22.8px;color:#f0f0f0;font-family:'Liberation Serif',serif;left:13.37px;transform:scaleX(1.259);transform-origin:50% 50%;">T</div>
<svg style="left:27.7px;top:505.01px;width:4.57px;height:4.2px;" viewBox="0 0 3 3" preserveAspectRatio="none"><path d="M3 0 V3 H0 Z" fill="#f2f2f2"/></svg>
<svg style="left:8.07px;top:515.64px;width:21.92px;height:20.14px;opacity:.9;" viewBox="0 0 14.4 14.4" preserveAspectRatio="none"><path d="M3.6 1 V12 L6.2 9.6 L8 13.6 L9.8 12.8 L8 9 L11.4 8.8 Z" fill="#111" stroke="#d8d8d8" stroke-width="1"/></svg>
<svg style="left:27.7px;top:533.26px;width:4.57px;height:4.2px;" viewBox="0 0 3 3" preserveAspectRatio="none"><path d="M3 0 V3 H0 Z" fill="#f2f2f2"/></svg>
<svg style="left:8.07px;top:541.1px;width:21.92px;height:20.14px;opacity:.9;" viewBox="0 0 14.4 14.4" preserveAspectRatio="none"><rect x="2.6" y="3.4" width="10.4" height="8.6" fill="#8e8e8e" stroke="#c8c8c8" stroke-width="1.1"/></svg>
<svg style="left:27.7px;top:558.72px;width:4.57px;height:4.2px;" viewBox="0 0 3 3" preserveAspectRatio="none"><path d="M3 0 V3 H0 Z" fill="#f2f2f2"/></svg>
<div style="left:4.57px;top:566.56px;width:30.44px;height:1px;background:#454545"></div>
<svg style="left:8.07px;top:570.47px;width:21.92px;height:20.14px;opacity:.9;" viewBox="0 0 14.4 14.4" preserveAspectRatio="none"><path d="M3.4 8.6 L1.6 6.4 Q2.6 5.2 3.8 6.2 L5 7.4 V3 Q5.8 2 6.6 3 V1.8 Q7.4 0.8 8.4 1.8 V2.6 Q9.4 1.8 10.2 2.8 V4 Q11.2 3.4 11.8 4.4 V9.4 Q11.6 12.4 9.8 13.8 H5.6 Q4 11 3.4 8.6 Z" fill="#d4d4d4"/></svg>
<svg style="left:27.7px;top:588.1px;width:4.57px;height:4.2px;" viewBox="0 0 3 3" preserveAspectRatio="none"><path d="M3 0 V3 H0 Z" fill="#f2f2f2"/></svg>
<svg style="left:8.07px;top:594.26px;width:21.92px;height:20.14px;opacity:.9;" viewBox="0 0 14.4 14.4" preserveAspectRatio="none"><circle cx="6.4" cy="5.8" r="3.9" fill="#8a8a8a" stroke="#d2d2d2" stroke-width="1.3"/><path d="M9 8.8 L13.6 13.8" stroke="#d2d2d2" stroke-width="2"/></svg>
<svg style="left:4.57px;top:621.11px;width:11.26px;height:10.91px;" viewBox="0 0 7.4 7.8" preserveAspectRatio="none"><rect x="2.6" y="2.8" width="4.4" height="4.6" fill="#f2f2f2"/><rect x="0.4" y="0.4" width="4.4" height="4.6" fill="#1a1a1a" stroke="#ddd" stroke-width="0.8"/></svg>
<svg style="left:22.22px;top:620.83px;width:11.26px;height:11.19px;" viewBox="0 0 7.4 8" preserveAspectRatio="none"><path d="M1.4 1.8 Q5.4 1.4 5.6 6" fill="none" stroke="#d8d8d8" stroke-width="1.1"/><path d="M0 1.8 L2.2 0 V3.6 Z M5.6 7.8 L3.8 5.4 H7.4 Z" fill="#d8d8d8"/></svg>
<div style="left:15.52px;top:647.69px;width:17.96px;height:17.91px;background:#000;border:1.3px solid #f0f0f0;"></div>
<div style="left:4.57px;top:637.9px;width:18.26px;height:17.91px;background:#e2f6f6;border:1px solid #f8f8f8;"></div>
<svg style="left:9.13px;top:673.71px;width:18.87px;height:15.39px;" viewBox="0 0 12.4 11" preserveAspectRatio="none"><rect x="0.6" y="0.6" width="11.2" height="9.8" fill="#606060" stroke="#d4d4d4" stroke-width="1.1"/><circle cx="6.2" cy="5.5" r="2.9" fill="none" stroke="#c8c8c8" stroke-width="1"/></svg>
<svg style="left:9.13px;top:701.69px;width:18.87px;height:15.11px;" viewBox="0 0 12.4 10.8" preserveAspectRatio="none"><rect x="3.6" y="0.6" width="8.2" height="6.4" fill="#7a7a7a" stroke="#c8c8c8" stroke-width="1"/><rect x="0.6" y="3.4" width="8.2" height="6.6" fill="#5a5a5a" stroke="#d0d0d0" stroke-width="1"/></svg>
<svg style="left:28.31px;top:718.48px;width:3.96px;height:3.64px;" viewBox="0 0 2.6 2.6" preserveAspectRatio="none"><path d="M2.6 0 V2.6 H0 Z" fill="#e8e8e8"/></svg>
<div style="left:38.81px;top:710.64px;width:1327.19px;height:17.21px;background:#474747;"></div>
<div style="left:38.81px;top:710.64px;width:1327.19px;height:1.2px;background:#333"></div>
<div style="left:38.81px;top:711.2px;width:50.38px;height:16.65px;background:#414141;"></div>
<div class="t" id="t134" style="top:713.02px;font-size:10.5px;line-height:12.6px;color:#f2f2f2;left:54.79px;transform:scaleX(0.978);transform-origin:0 50%;">25%</div>
<div style="left:89.19px;top:711.2px;width:23.44px;height:16.65px;background:#5e5e5e;"></div>
<svg style="left:94.06px;top:712.88px;width:13.39px;height:13.15px;" viewBox="0 0 8.8 9.4" preserveAspectRatio="none"><ellipse cx="4.4" cy="4.7" rx="4.1" ry="4.4" fill="#cfcfcf"/><path d="M3.2 2.2 V6.6 H6.6" fill="none" stroke="#6a6a6a" stroke-width="1.5"/></svg>
<div style="left:112.63px;top:711.2px;width:184.47px;height:16.65px;background:#535353;"></div>
<div class="t" id="t135" style="top:713.02px;font-size:10.5px;line-height:12.6px;color:#ececec;left:159.81px;transform:scaleX(0.946);transform-origin:0 50%;">Doc: 11,9M/1,54G</div>
<svg style="left:287.35px;top:715.68px;width:7px;height:7.83px;" viewBox="0 0 4.6 5.6" preserveAspectRatio="none"><path d="M0.3 0 V5.6 L4.4 2.8 Z" fill="#f4f4f4"/></svg>
<div style="left:297.1px;top:711.2px;width:1052.92px;height:16.65px;background:#474747;"></div>
<div style="left:1350.02px;top:711.2px;width:15.98px;height:16.65px;background:#5a5a5a;"></div>
<div style="left:0px;top:727.85px;width:1366px;height:40.43px;background:#101112;"></div>
<svg style="left:16.13px;top:740.02px;width:17.05px;height:16.23px;" viewBox="0 0 11.2 11.6" preserveAspectRatio="none"><path d="M0 1.6 L4.9 0.9 V5.5 H0 Z M5.6 0.8 L11.2 0 V5.5 H5.6 Z M0 6.2 H4.9 V10.8 L0 10.1 Z M5.6 6.2 H11.2 V11.6 L5.6 10.8 Z" fill="#fff"/></svg>
<svg style="left:63.32px;top:739.46px;width:17.96px;height:17.63px;" viewBox="0 0 11.8 12.6" preserveAspectRatio="none"><ellipse cx="7.6" cy="4.8" rx="3.5" ry="3.9" fill="none" stroke="#f2f2f2" stroke-width="1.2"/><path d="M5.2 7.8 L0.6 12.2" stroke="#f2f2f2" stroke-width="1.2"/></svg>
<svg style="left:112.02px;top:740.02px;width:17.96px;height:15.95px;" viewBox="0 0 11.8 11.4" preserveAspectRatio="none"><rect x="1.4" y="3" width="6.6" height="5.4" fill="none" stroke="#f2f2f2" stroke-width="1.1"/><path d="M0.6 0.6 H2.4 M7 0.6 H8.8 M0.6 10.8 H2.4 M7 10.8 H8.8 M1.4 0.6 V2.4 M8 0.6 V2.4 M1.4 9 V10.8 M8 9 V10.8" stroke="#f2f2f2" stroke-width="1"/><path d="M10.6 0.4 V3 M10.6 5 V11" stroke="#f2f2f2" stroke-width="1.1"/><rect x="9.9" y="3.4" width="1.4" height="1.4" fill="#f2f2f2"/></svg>
<div class="t" id="t136" style="top:719.2px;font-size:41px;line-height:49.2px;color:#1c84e4;font-weight:700;left:161.49px;transform:scaleX(1.014);transform-origin:50% 50%;">e</div>
<svg style="left:208.51px;top:737.78px;width:26.48px;height:18.47px;" viewBox="0 0 17.4 13.2" preserveAspectRatio="none"><path d="M1 12.6 Q0.4 1.4 8.7 1.2 Q17 1.4 16.4 12.6" fill="none" stroke="#2e6fae" stroke-width="1.8"/><path d="M5.4 6.6 L8.7 9.4 L12 6.6 L11 10.6 H6.4 Z" fill="#2e6fae"/></svg>
<svg style="left:258.13px;top:738.06px;width:23.44px;height:19.3px;" viewBox="0 0 15.4 13.8" preserveAspectRatio="none"><path d="M0.4 1.4 H5.4 L6.6 2.8 H15 V13 H0.4 Z" fill="#f3c64a"/><path d="M0.4 4.6 H15 V13 H0.4 Z" fill="#f8dc7e"/><rect x="4" y="8" width="7.4" height="5" fill="#3fa3e6"/><rect x="5.6" y="10" width="4.2" height="3" fill="#cfeaff"/></svg>
<div style="left:249.61px;top:766.04px;width:41.09px;height:2.24px;background:#cdeef0;"></div>
<svg style="left:307.45px;top:736.1px;width:23.44px;height:22.1px;" viewBox="0 0 15.4 15.8" preserveAspectRatio="none"><path d="M4.8 5 V3.6 A2.9 2.6 0 0 1 10.6 3.6 V5" fill="none" stroke="#e8e8e8" stroke-width="1.1"/><path d="M0.6 4.6 H14.8 V15 H0.6 Z" fill="#f6f6f6"/><rect x="4.6" y="6.6" width="2.8" height="2.9" fill="#e8452c"/><rect x="8" y="6.6" width="2.8" height="2.9" fill="#7cba2a"/><rect x="4.6" y="10.1" width="2.8" height="2.9" fill="#2c9de8"/><rect x="8" y="10.1" width="2.8" height="2.9" fill="#f5b81c"/></svg>
<svg style="left:355.54px;top:737.22px;width:26.48px;height:20.98px;" viewBox="0 0 17.4 15" preserveAspectRatio="none"><rect x="6" y="1" width="10.6" height="11" fill="#2a8fe0"/><rect x="9.6" y="1" width="3.4" height="3.6" fill="#5cb8f4"/><rect x="13" y="4.6" width="3.6" height="3.6" fill="#1670c4"/><path d="M6 8 L11.4 11.6 L16.6 8 V14 H6 Z" fill="#1b62b0"/><rect x="0.4" y="3.6" width="8.2" height="9" fill="#0f68c0"/></svg>
<div class="t" id="t137" style="top:743.27px;font-size:9.5px;line-height:11.4px;color:#fff;font-weight:700;left:359.48px;transform:scaleX(1.152);transform-origin:50% 50%;">o</div>
<div style="left:348.54px;top:766.04px;width:41.09px;height:2.24px;background:#cdeef0;"></div>
<svg style="left:405.77px;top:736.38px;width:24.35px;height:22.66px;" viewBox="0 0 16 16.2" preserveAspectRatio="none"><ellipse cx="8" cy="8.1" rx="7.6" ry="7.9" fill="#e34133"/><path d="M8 8.1 L1.4 4.2 A7.6 7.9 0 0 0 4.8 15.3 Z" fill="#2ea04c"/><path d="M8 8.1 L4.8 15.3 A7.6 7.9 0 0 0 15.6 8.1 Q15.4 5.6 14.6 4.2 Z" fill="#f7c52e"/><path d="M8 8.1 L14.6 4.2 L8 4.4 Z" fill="#e34133"/><ellipse cx="8" cy="8.1" rx="3.5" ry="3.7" fill="#f4f4f4"/><ellipse cx="8" cy="8.1" rx="2.7" ry="2.9" fill="#4a8af0"/></svg>
<div style="left:443.36px;top:727.85px;width:48.25px;height:40.43px;background:#3b3c3d;"></div>
<div style="left:443.36px;top:766.04px;width:48.25px;height:2.24px;background:#cdeef0;"></div>
<div style="left:455.99px;top:736.38px;width:22.22px;height:20.14px;background:#0c0c60;border:1.4px solid #8c9cf4;"></div>
<div class="t" id="t138" style="top:739.24px;font-size:12.5px;line-height:15px;color:#b9c4ff;font-weight:700;left:459.61px;transform:scaleX(0.955);transform-origin:50% 50%;">Ps</div>
<svg style="left:1161.9px;top:738.9px;width:18.26px;height:17.91px;" viewBox="0 0 12 12.8" preserveAspectRatio="none"><g fill="none" stroke="#f0f0f0" stroke-width="1"><circle cx="8.4" cy="2.8" r="2"/><path d="M5.4 9.4 Q5.4 5.4 8.4 5.4 Q11.4 5.4 11.4 8.4"/><circle cx="4" cy="6.4" r="1.8"/><path d="M0.8 12.4 Q1 8.8 4 8.8 Q7 8.8 7.2 12.4"/></g></svg>
<svg style="left:1200.25px;top:743.1px;width:13.7px;height:8.95px;" viewBox="0 0 9 6.4" preserveAspectRatio="none"><path d="M0.6 5.6 L4.5 1 L8.4 5.6" fill="none" stroke="#f0f0f0" stroke-width="1.2"/></svg>
<svg style="left:1221.56px;top:740.02px;width:19.79px;height:16.79px;" viewBox="0 0 13 12" preserveAspectRatio="none"><path d="M0.6 4 H3 L6 1 V11 L3 8 H0.6 Z" fill="none" stroke="#f0f0f0" stroke-width="1"/><path d="M7.8 4 Q9 6 7.8 8 M9.6 2.6 Q11.6 6 9.6 9.4 M11.4 1.4 Q14 6 11.4 10.6" fill="none" stroke="#f0f0f0" stroke-width="0.9"/></svg>
<div class="t" id="t139" style="top:731.72px;font-size:11.5px;line-height:13.8px;color:#f4f4f4;left:1264.09px;transform:scaleX(0.952);transform-origin:50% 50%;">15:25</div>
<div class="t" id="t140" style="top:749.91px;font-size:11.5px;line-height:13.8px;color:#f4f4f4;left:1249.7px;transform:scaleX(1.018);transform-origin:50% 50%;">20/06/2019</div>
<svg style="left:1325.06px;top:739.74px;width:18.26px;height:17.63px;" viewBox="0 0 12 12.6" preserveAspectRatio="none"><path d="M0.6 0.6 H10.4 V8.8 H4.6 L2.4 11.4 V8.8 H0.6 Z" fill="#f4f4f4"/><path d="M2.4 2.8 H8.6 M2.4 4.8 H8.6 M2.4 6.8 H6.4" stroke="#222" stroke-width="0.9"/><circle cx="9.4" cy="9.6" r="2.2" fill="#f4f4f4" stroke="#222" stroke-width="0.7"/></svg>
<div style="left:1362.5px;top:728.83px;width:1px;height:39.17px;background:#4a4a4a"></div>
</div>
<div id="cap"><div id="c1" style="transform:scaleX(1.067)">Para criar este Gif</div><div id="c2" style="transform:scaleX(1.064)">de 9 segundos foram</div><div id="c3" style="transform:scaleX(1.050)">necessários 31 planos</div><div id="c4" style="transform:scaleX(1.099)">diferentes.</div></div>
</body></html>
